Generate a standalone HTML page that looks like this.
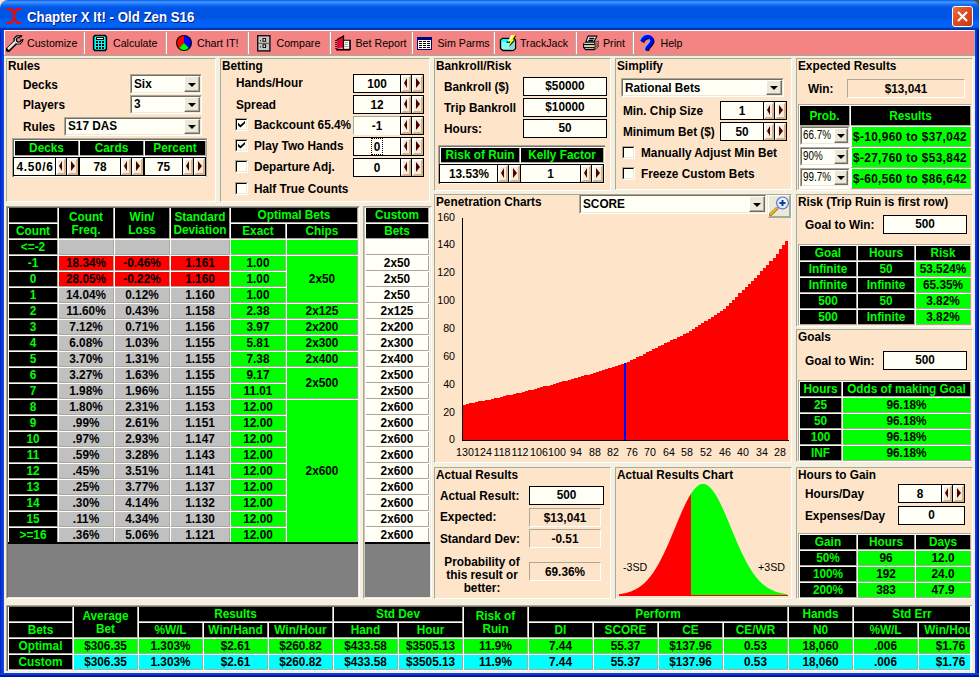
<!DOCTYPE html>
<html><head><meta charset="utf-8"><title>Chapter X It! - Old Zen S16</title>
<style>
html,body{margin:0;padding:0;}
html{width:979px;height:677px;overflow:hidden;}
body{width:979px;height:677px;overflow:hidden;position:relative;background:#0831D9;font-family:"Liberation Sans",sans-serif;}
div,svg{position:absolute;box-sizing:border-box;}
.t{white-space:nowrap;overflow:visible;color:#000;}
.b{font-weight:bold;font-size:12.5px;transform:scaleX(0.944);}
.l{text-align:left;transform-origin:0 50%;}
.c{text-align:center;transform-origin:50% 50%;}
.r{text-align:right;transform-origin:100% 50%;}
.r11{font-weight:normal;font-size:10.67px;}
.r10{font-weight:normal;font-size:12px;transform:scaleX(0.82);}
.tb{font-weight:normal;font-size:10.67px;}
.title{font-weight:bold;font-size:14.2px;transform:scaleX(0.935);transform-origin:0 0;color:#fff;text-shadow:1px 1px 0 #0A1883;}
</style></head><body>
<div style="left:0;top:0;width:979px;height:677px;overflow:hidden;">
<div style="left:0px;top:0px;width:979px;height:677px;background:#0831D9;"></div>
<div style="left:0px;top:0px;width:10px;height:10px;background:#FEE5CA;"></div>
<div style="left:969px;top:0px;width:10px;height:10px;background:#4B4A32;"></div>
<div style="left:0px;top:0px;width:979px;height:30px;background:linear-gradient(to bottom,#0148D8 0px,#2F86FB 1px,#3C90FF 2.5px,#1E78F8 4px,#0862EE 6px,#0055E5 8px,#0053E1 18px,#005DF2 20px,#0064F8 26px,#0058E6 27.5px,#0036B8 28.5px,#002C9E 30px);border-radius:8px 8px 0 0;"></div>
<div style="left:0px;top:30px;width:4px;height:647px;background:linear-gradient(to right,#001EB4 0,#0830D6 1px,#0A3CDC 2.5px,#1450E6 4px);"></div>
<div style="left:975px;top:30px;width:4px;height:647px;background:linear-gradient(to right,#0A46E6 0,#0838D8 1.5px,#001EA4 2.5px,#00138C 4px);"></div>
<div style="left:0px;top:673px;width:979px;height:4px;background:linear-gradient(to bottom,#0A46E6 0,#0838D8 1.5px,#001EA4 2.5px,#00138C 4px);"></div>
<svg style="left:6px;top:8px" width="16" height="16" viewBox="0 0 16 16"><path d="M0.5 0.8 H3 C6 0.8 7 3.5 8 6.5 C9 3.5 10 0.8 13 0.8 H15.5 M0.5 15.2 H3 C6 15.2 7 12.5 8 9.5 C9 12.5 10 15.2 13 15.2 H15.5 M8 5 V11" fill="none" stroke="#FF0000" stroke-width="2.3"/></svg>
<div class="t title l" style="left:26.5px;top:8px;width:300px;height:18px;line-height:18px;">Chapter X It! - Old Zen S16</div>
<div style="left:952px;top:6px;width:21px;height:21px;border:1px solid #fff;border-radius:3px;background:linear-gradient(135deg,#E9733F 0%,#DD4B20 45%,#C83A12 100%);"></div>
<svg style="left:952px;top:6px" width="21" height="21" viewBox="0 0 21 21"><path d="M6 6 L15 15 M15 6 L6 15" stroke="#fff" stroke-width="2.2" stroke-linecap="butt"/></svg>
<div style="left:4px;top:30px;width:971px;height:643px;background:#F6EFDD;"></div>
<div style="left:4px;top:30px;width:971px;height:25px;background:#F48383;border-top:1px solid #fff;border-left:1px solid #fff;border-right:1px solid #A0AC9C;"></div>
<div style="left:4px;top:55px;width:971px;height:1px;background:#A0AC9C;"></div>
<div style="left:83px;top:32px;width:1px;height:22px;background:#A9B5A4;"></div>
<div style="left:84px;top:32px;width:1px;height:22px;background:#FFFFFF;"></div>
<div style="left:165px;top:32px;width:1px;height:22px;background:#A9B5A4;"></div>
<div style="left:166px;top:32px;width:1px;height:22px;background:#FFFFFF;"></div>
<div style="left:247px;top:32px;width:1px;height:22px;background:#A9B5A4;"></div>
<div style="left:248px;top:32px;width:1px;height:22px;background:#FFFFFF;"></div>
<div style="left:329px;top:32px;width:1px;height:22px;background:#A9B5A4;"></div>
<div style="left:330px;top:32px;width:1px;height:22px;background:#FFFFFF;"></div>
<div style="left:411px;top:32px;width:1px;height:22px;background:#A9B5A4;"></div>
<div style="left:412px;top:32px;width:1px;height:22px;background:#FFFFFF;"></div>
<div style="left:493px;top:32px;width:1px;height:22px;background:#A9B5A4;"></div>
<div style="left:494px;top:32px;width:1px;height:22px;background:#FFFFFF;"></div>
<div style="left:575px;top:32px;width:1px;height:22px;background:#A9B5A4;"></div>
<div style="left:576px;top:32px;width:1px;height:22px;background:#FFFFFF;"></div>
<div style="left:632px;top:32px;width:1px;height:22px;background:#A9B5A4;"></div>
<div style="left:633px;top:32px;width:1px;height:22px;background:#FFFFFF;"></div>
<svg style="left:6px;top:34px" width="18" height="18" viewBox="0 0 18 18"><path d="M2.2 15.6 L9 8.8" stroke="#000" stroke-width="4.8" stroke-linecap="square"/><path d="M7.6 4.2 L10.4 1.2 H14.6 L17 3.4 V7.6 L14.4 10.6 H10 L7.6 8.6 Z" fill="#000"/><path d="M8.8 4.7 L10.9 2.4 H14.1 L15.8 3.9 V7.1 L13.9 9.4 H10.5 L8.8 8.1 Z" fill="#F8F8F8"/><path d="M2 15.2 L9.2 8.2" stroke="#F4F4F4" stroke-width="2.4" stroke-linecap="butt"/><path d="M2.6 15.8 L9.6 9" stroke="#9A9A9A" stroke-width="1" stroke-dasharray="1 1"/><circle cx="12.6" cy="5.8" r="2.9" fill="#000"/><circle cx="12.7" cy="5.7" r="1.7" fill="#F48383"/><path d="M12.8 5.6 L17.6 1.6 L18 5 Z" fill="#F48383"/><path d="M13.4 3.2 L16.2 1.4 M15.2 6.4 L17.6 5.6" stroke="#000" stroke-width="1.1"/></svg>
<div class="t tb l" style="left:27px;top:36px;width:100px;height:14px;line-height:14px;">Customize</div>
<svg style="left:92px;top:34px" width="16" height="18" viewBox="0 0 16 18"><path d="M2.8 1.6 H13.2 L14.4 2.8 V15.2 L13.2 16.4 H2.8 L1.6 15.2 V2.8 Z" fill="#00FFFF" stroke="#000" stroke-width="1.5"/><g shape-rendering="crispEdges"><rect x="4" y="3" width="8" height="3" fill="#000"/><rect x="5" y="4" width="6" height="1" fill="#fff"/><g fill="#000"><rect x="4" y="7" width="2" height="2"/><rect x="7" y="7" width="2" height="2"/><rect x="10" y="7" width="2" height="2"/><rect x="4" y="10" width="2" height="2"/><rect x="7" y="10" width="2" height="2"/><rect x="10" y="10" width="2" height="2"/><rect x="4" y="13" width="2" height="2"/><rect x="7" y="13" width="2" height="2"/><rect x="10" y="13" width="2" height="2"/></g></g></svg>
<div class="t tb l" style="left:113px;top:36px;width:100px;height:14px;line-height:14px;">Calculate</div>
<svg style="left:175px;top:34px" width="18" height="18" viewBox="0 0 18 18"><circle cx="9" cy="9" r="8" fill="#000"/><path d="M9 9 L9 2.1 A6.9 6.9 0 0 0 4.12 13.88 Z" fill="#FF0000"/><path d="M9 9 L13.88 13.88 A6.9 6.9 0 0 0 9 2.1 Z" fill="#0000FF"/><path d="M9 9 L4.12 13.88 A6.9 6.9 0 0 0 13.88 13.88 Z" fill="#00FF00"/></svg>
<div class="t tb l" style="left:197px;top:36px;width:100px;height:14px;line-height:14px;">Chart IT!</div>
<svg style="left:257px;top:35px" width="14" height="17" viewBox="0 0 14 17"><rect x="0.7" y="0.7" width="12.2" height="15.2" fill="#C6C6C6" stroke="#101010" stroke-width="1.4"/><path d="M1 8.3 H13" stroke="#505050" stroke-width="1"/><rect x="6" y="3.6" width="2.6" height="2.6" fill="#fff" stroke="#000" stroke-width="1"/><rect x="6" y="9.8" width="2.6" height="2.6" fill="#fff" stroke="#000" stroke-width="1"/><rect x="3" y="5.2" width="1" height="1" fill="#000"/><rect x="3" y="11.4" width="1" height="1" fill="#000"/></svg>
<div class="t tb l" style="left:276.5px;top:36px;width:100px;height:14px;line-height:14px;">Compare</div>
<svg style="left:334px;top:34px" width="18" height="18" viewBox="0 0 18 18"><path d="M9.1 5.8 H16.8 V15.9 H2.3 V15 H9.1Z" fill="#000"/><rect x="10.1" y="6.8" width="5.1" height="8" fill="#fff"/><path d="M11 8.6 H14 M10.6 10.5 H13.4 M10.4 12.6 H14.4" stroke="#8A8A8A" stroke-width="0.9"/><path d="M3.1 5.8 L9.1 2.7 V12.1 L3.1 15.2 Z" fill="#E4003C"/><path d="M5 4.9 L9.1 2.7 V9 Z" fill="#FF0000"/><path d="M2.8 5.7 L9.5 2.1 V6" stroke="#000" stroke-width="1.2" fill="none"/><path d="M9.4 6 V12.4 L7.5 13.6" stroke="#000" stroke-width="0.9" fill="none"/><path d="M1.1 6.5 H3 M1.1 8.4 H3 M1.1 10.3 H3 M1.1 12.4 H3 M1.1 14.4 H3" stroke="#000" stroke-width="0.9"/><rect x="2.1" y="16.1" width="14" height="0.8" fill="#900000"/></svg>
<div class="t tb l" style="left:355.5px;top:36px;width:100px;height:14px;line-height:14px;">Bet Report</div>
<svg style="left:417px;top:37px" width="15" height="13" viewBox="0 0 15 13" shape-rendering="crispEdges"><rect x="0" y="0" width="15" height="13" fill="#000080"/><rect x="1" y="3" width="13" height="9" fill="#FFFFF8"/><g fill="#000"><rect x="2" y="4" width="3" height="1"/><rect x="6" y="4" width="3" height="1"/><rect x="10" y="4" width="3" height="1"/><rect x="2" y="6" width="3" height="1"/><rect x="6" y="6" width="3" height="1"/><rect x="10" y="6" width="3" height="1"/><rect x="2" y="8" width="3" height="1"/><rect x="6" y="8" width="3" height="1"/><rect x="10" y="8" width="3" height="1"/><rect x="2" y="10" width="3" height="1"/><rect x="6" y="10" width="3" height="1"/><rect x="10" y="10" width="3" height="1"/></g></svg>
<div class="t tb l" style="left:437.5px;top:36px;width:100px;height:14px;line-height:14px;">Sim Parms</div>
<svg style="left:499px;top:34px" width="18" height="18" viewBox="0 0 18 18"><path d="M1.5 6 L3.5 4.5 H14.5 L16.5 6 V14.5 L14 16.5 H4 L1.5 14.5 Z" fill="#86FFFF" stroke="#000" stroke-width="1.4" stroke-linejoin="miter"/><path d="M10.5 8 L16 7 V14.2 L13.8 16 H10.5 Z" fill="#8FD6D6"/><rect x="2.6" y="5.3" width="8" height="2.5" fill="#00FFFF"/><path d="M7.5 8.2 H12" stroke="#000" stroke-width="1.3"/><path d="M13.3 1.6 L17.4 1.5 L14.4 6.2 L16.2 6.2 L10 13 L12.2 7.8 L9.8 7.8 Z" fill="#000"/><path d="M12.5 1 L16.6 0.9 L13.6 5.6 L15.4 5.6 L9.2 12.4 L11.4 7.2 L9 7.2 Z" fill="#FFFF00"/><path d="M12.5 1 L14.4 0.95 L10.8 7.2 L9 7.2 Z" fill="#fff"/></svg>
<div class="t tb l" style="left:520px;top:36px;width:100px;height:14px;line-height:14px;">TrackJack</div>
<svg style="left:582px;top:35px" width="18" height="16" viewBox="0 0 18 16"><path d="M12.6 6.8 L16.8 5.6 V11.5 L13.4 15 H12.6 Z" fill="#6A3A3A"/><path d="M1.1 8.4 L3.6 6.8 H12.6 V15.2 H3.4 L1.1 12.8 Z" fill="#000"/><path d="M6 1.1 H15 L12.1 6.8 H4 Z" fill="#fff" stroke="#000" stroke-width="1.1" stroke-linejoin="round"/><path d="M7.2 3.5 H12.4 M6.3 5.4 H11.4" stroke="#000" stroke-width="1.3"/><rect x="2.2" y="7.7" width="9.8" height="1.2" fill="#E0E0E0"/><rect x="2.1" y="10.1" width="10.4" height="2" fill="#D4D4D4"/><rect x="7.8" y="10.6" width="3.3" height="1" fill="#F0F000"/><rect x="3.2" y="13.1" width="8.6" height="0.9" fill="#C8C8C8"/><path d="M13.4 8.2 L15.8 7.4 M13.6 10.4 L15.6 9.2 M13.6 13 L15.4 11.4" stroke="#E8C8C8" stroke-width="0.8"/></svg>
<div class="t tb l" style="left:603px;top:36px;width:100px;height:14px;line-height:14px;">Print</div>
<svg style="left:639px;top:34px" width="17" height="18" viewBox="0 0 17 18"><g fill="none" stroke-linecap="butt" stroke-linejoin="round"><path d="M3.6 8.2 C5.3 4.3 7.8 3.2 10.2 3.6 C14.3 4.3 14.8 8.3 12.3 10.8 C10.3 12.8 8.6 14.2 8.4 16.8" stroke="#000" stroke-width="3.4"/><path d="M2.2 6.8 C3.9 2.9 6.4 1.8 8.8 2.2 C12.9 2.9 13.4 6.9 10.9 9.4 C8.9 11.4 7.2 12.8 7 15.4" stroke="#00F0FF" stroke-width="3.4"/><path d="M2.8 7.4 C4.5 3.5 7 2.4 9.4 2.8 C13.5 3.5 14 7.5 11.5 10 C9.5 12 7.8 13.4 7.6 16" stroke="#0000FF" stroke-width="3.4"/></g></svg>
<div class="t tb l" style="left:660.5px;top:36px;width:100px;height:14px;line-height:14px;">Help</div>
<div style="left:6px;top:58px;width:210px;height:144px;background:#FEE5CA;border-top:1px solid #A0AC9C;border-left:1px solid #A0AC9C;border-bottom:1px solid #fff;border-right:1px solid #fff;"></div>
<div class="t b l" style="left:8px;top:59px;width:200px;height:14px;line-height:14px;">Rules</div>
<div class="t b l" style="left:23px;top:78px;width:200px;height:14px;line-height:14px;">Decks</div>
<div class="t b l" style="left:23px;top:98px;width:200px;height:14px;line-height:14px;">Players</div>
<div class="t b l" style="left:23px;top:120px;width:200px;height:14px;line-height:14px;">Rules</div>
<div style="left:130px;top:74px;width:72px;height:20px;background:#FFFFF5;border-top:1px solid #ACA899;border-left:1px solid #ACA899;border-bottom:1px solid #fff;border-right:1px solid #fff;"></div>
<div style="left:131px;top:75px;width:70px;height:18px;border-top:1px solid #716F64;border-left:1px solid #716F64;border-bottom:1px solid #ECE9D8;border-right:1px solid #ECE9D8;"></div>
<div style="left:184px;top:76px;width:16px;height:16px;background:#ECE9D8;border-top:1px solid #fff;border-left:1px solid #fff;border-bottom:1px solid #716F64;border-right:1px solid #716F64;box-shadow:inset -1px -1px 0 #ACA899;"></div>
<div style="left:188px;top:83px;width:0;height:0;border-left:4px solid transparent;border-right:4px solid transparent;border-top:4px solid #000;"></div>
<div class="t b l" style="left:134px;top:77px;width:50px;height:14px;line-height:14px;">Six</div>
<div style="left:130px;top:95px;width:72px;height:19px;background:#FFFFF5;border-top:1px solid #ACA899;border-left:1px solid #ACA899;border-bottom:1px solid #fff;border-right:1px solid #fff;"></div>
<div style="left:131px;top:96px;width:70px;height:17px;border-top:1px solid #716F64;border-left:1px solid #716F64;border-bottom:1px solid #ECE9D8;border-right:1px solid #ECE9D8;"></div>
<div style="left:184px;top:97px;width:16px;height:15px;background:#ECE9D8;border-top:1px solid #fff;border-left:1px solid #fff;border-bottom:1px solid #716F64;border-right:1px solid #716F64;box-shadow:inset -1px -1px 0 #ACA899;"></div>
<div style="left:188px;top:103px;width:0;height:0;border-left:4px solid transparent;border-right:4px solid transparent;border-top:4px solid #000;"></div>
<div class="t b l" style="left:134px;top:97px;width:50px;height:14px;line-height:14px;">3</div>
<div style="left:64px;top:117px;width:138px;height:19px;background:#FFFFF5;border-top:1px solid #ACA899;border-left:1px solid #ACA899;border-bottom:1px solid #fff;border-right:1px solid #fff;"></div>
<div style="left:65px;top:118px;width:136px;height:17px;border-top:1px solid #716F64;border-left:1px solid #716F64;border-bottom:1px solid #ECE9D8;border-right:1px solid #ECE9D8;"></div>
<div style="left:184px;top:119px;width:16px;height:15px;background:#ECE9D8;border-top:1px solid #fff;border-left:1px solid #fff;border-bottom:1px solid #716F64;border-right:1px solid #716F64;box-shadow:inset -1px -1px 0 #ACA899;"></div>
<div style="left:188px;top:125px;width:0;height:0;border-left:4px solid transparent;border-right:4px solid transparent;border-top:4px solid #000;"></div>
<div class="t b l" style="left:68px;top:119px;width:116px;height:14px;line-height:14px;">S17 DAS</div>
<div style="left:12px;top:138px;width:195px;height:39px;background:#fff;border-right:1px solid #ACA899;border-top:1px solid #ACA899;border-left:1px solid #ACA899;"></div>
<div style="left:13px;top:139px;width:193px;height:38px;background:#fff;border-top:1px solid #716F64;border-left:1px solid #716F64;"></div>
<div style="left:15px;top:141px;width:64px;height:15px;background:#000;border-right:1px solid #ACA899;border-bottom:1px solid #ACA899;"></div>
<div class="t b c" style="left:15px;top:141px;width:63px;height:14px;line-height:14px;color:#00FF00;">Decks</div>
<div style="left:13px;top:157px;width:66px;height:19px;background:#FFFFF5;border:1px solid #000;"></div>
<div style="left:66px;top:158px;width:1px;height:17px;background:#000;"></div>
<div style="left:55px;top:158px;width:1px;height:17px;background:#000;"></div>
<div style="left:56px;top:158px;width:10px;height:17px;background:#F6ECDA;border-top:2px solid #fff;border-left:2px solid #fff;border-bottom:2px solid #D3B48F;border-right:2px solid #D3B48F;"></div>
<div style="left:59px;top:161px;width:0;height:0;border-top:5.5px solid transparent;border-bottom:5.5px solid transparent;border-right:3px solid #4A0000;"></div>
<div style="left:67px;top:158px;width:11px;height:17px;background:#F6ECDA;border-top:2px solid #fff;border-left:2px solid #fff;border-bottom:2px solid #D3B48F;border-right:2px solid #D3B48F;"></div>
<div style="left:71px;top:161px;width:0;height:0;border-top:5.5px solid transparent;border-bottom:5.5px solid transparent;border-left:4px solid #4A0000;"></div>
<div class="t b c" style="left:15px;top:160px;width:40px;height:14px;line-height:14px;letter-spacing:0.7px;">4.50/6</div>
<div style="left:80px;top:141px;width:64px;height:15px;background:#000;border-right:1px solid #ACA899;border-bottom:1px solid #ACA899;"></div>
<div class="t b c" style="left:80px;top:141px;width:63px;height:14px;line-height:14px;color:#00FF00;">Cards</div>
<div style="left:79px;top:157px;width:65px;height:19px;background:#FFFFF5;border:1px solid #000;"></div>
<div style="left:131px;top:158px;width:1px;height:17px;background:#000;"></div>
<div style="left:120px;top:158px;width:1px;height:17px;background:#000;"></div>
<div style="left:121px;top:158px;width:10px;height:17px;background:#F6ECDA;border-top:2px solid #fff;border-left:2px solid #fff;border-bottom:2px solid #D3B48F;border-right:2px solid #D3B48F;"></div>
<div style="left:124px;top:161px;width:0;height:0;border-top:5.5px solid transparent;border-bottom:5.5px solid transparent;border-right:3px solid #4A0000;"></div>
<div style="left:132px;top:158px;width:11px;height:17px;background:#F6ECDA;border-top:2px solid #fff;border-left:2px solid #fff;border-bottom:2px solid #D3B48F;border-right:2px solid #D3B48F;"></div>
<div style="left:136px;top:161px;width:0;height:0;border-top:5.5px solid transparent;border-bottom:5.5px solid transparent;border-left:4px solid #4A0000;"></div>
<div class="t b c" style="left:80px;top:160px;width:40px;height:14px;line-height:14px;letter-spacing:0;">78</div>
<div style="left:145px;top:141px;width:61px;height:15px;background:#000;border-right:1px solid #ACA899;border-bottom:1px solid #ACA899;"></div>
<div class="t b c" style="left:145px;top:141px;width:60px;height:14px;line-height:14px;color:#00FF00;">Percent</div>
<div style="left:144px;top:157px;width:62px;height:19px;background:#FFFFF5;border:1px solid #000;"></div>
<div style="left:193px;top:158px;width:1px;height:17px;background:#000;"></div>
<div style="left:182px;top:158px;width:1px;height:17px;background:#000;"></div>
<div style="left:183px;top:158px;width:10px;height:17px;background:#F6ECDA;border-top:2px solid #fff;border-left:2px solid #fff;border-bottom:2px solid #D3B48F;border-right:2px solid #D3B48F;"></div>
<div style="left:186px;top:161px;width:0;height:0;border-top:5.5px solid transparent;border-bottom:5.5px solid transparent;border-right:3px solid #4A0000;"></div>
<div style="left:194px;top:158px;width:11px;height:17px;background:#F6ECDA;border-top:2px solid #fff;border-left:2px solid #fff;border-bottom:2px solid #D3B48F;border-right:2px solid #D3B48F;"></div>
<div style="left:198px;top:161px;width:0;height:0;border-top:5.5px solid transparent;border-bottom:5.5px solid transparent;border-left:4px solid #4A0000;"></div>
<div class="t b c" style="left:145px;top:160px;width:37px;height:14px;line-height:14px;letter-spacing:0;">75</div>
<div style="left:220px;top:58px;width:210px;height:144px;background:#FEE5CA;border-top:1px solid #A0AC9C;border-left:1px solid #A0AC9C;border-bottom:1px solid #fff;border-right:1px solid #fff;"></div>
<div class="t b l" style="left:222px;top:59px;width:200px;height:14px;line-height:14px;">Betting</div>
<div class="t b l" style="left:236px;top:76px;width:200px;height:14px;line-height:14px;">Hands/Hour</div>
<div class="t b l" style="left:236px;top:98px;width:200px;height:14px;line-height:14px;">Spread</div>
<div style="left:353px;top:74px;width:71px;height:19px;background:#FFFFF5;border:1px solid #000;"></div>
<div style="left:411px;top:75px;width:1px;height:17px;background:#000;"></div>
<div style="left:400px;top:75px;width:1px;height:17px;background:#000;"></div>
<div style="left:401px;top:75px;width:10px;height:17px;background:#F6ECDA;border-top:2px solid #fff;border-left:2px solid #fff;border-bottom:2px solid #D3B48F;border-right:2px solid #D3B48F;"></div>
<div style="left:404px;top:78px;width:0;height:0;border-top:5.5px solid transparent;border-bottom:5.5px solid transparent;border-right:3px solid #4A0000;"></div>
<div style="left:412px;top:75px;width:11px;height:17px;background:#F6ECDA;border-top:2px solid #fff;border-left:2px solid #fff;border-bottom:2px solid #D3B48F;border-right:2px solid #D3B48F;"></div>
<div style="left:416px;top:78px;width:0;height:0;border-top:5.5px solid transparent;border-bottom:5.5px solid transparent;border-left:4px solid #4A0000;"></div>
<div class="t b c" style="left:354px;top:77px;width:46px;height:14px;line-height:14px;">100</div>
<div style="left:353px;top:95px;width:71px;height:19px;background:#FFFFF5;border:1px solid #000;"></div>
<div style="left:411px;top:96px;width:1px;height:17px;background:#000;"></div>
<div style="left:400px;top:96px;width:1px;height:17px;background:#000;"></div>
<div style="left:401px;top:96px;width:10px;height:17px;background:#F6ECDA;border-top:2px solid #fff;border-left:2px solid #fff;border-bottom:2px solid #D3B48F;border-right:2px solid #D3B48F;"></div>
<div style="left:404px;top:99px;width:0;height:0;border-top:5.5px solid transparent;border-bottom:5.5px solid transparent;border-right:3px solid #4A0000;"></div>
<div style="left:412px;top:96px;width:11px;height:17px;background:#F6ECDA;border-top:2px solid #fff;border-left:2px solid #fff;border-bottom:2px solid #D3B48F;border-right:2px solid #D3B48F;"></div>
<div style="left:416px;top:99px;width:0;height:0;border-top:5.5px solid transparent;border-bottom:5.5px solid transparent;border-left:4px solid #4A0000;"></div>
<div class="t b c" style="left:354px;top:98px;width:46px;height:14px;line-height:14px;">12</div>
<div style="left:353px;top:116px;width:47px;height:19px;background:#FFFFF5;border-top:1px solid #A0AC9C;border-left:1px solid #A0AC9C;border-bottom:1px solid #fff;"></div>
<div style="left:400px;top:116px;width:24px;height:19px;border:1px solid #000;"></div>
<div style="left:411px;top:117px;width:1px;height:17px;background:#000;"></div>
<div style="left:400px;top:117px;width:1px;height:17px;background:#000;"></div>
<div style="left:401px;top:117px;width:10px;height:17px;background:#F6ECDA;border-top:2px solid #fff;border-left:2px solid #fff;border-bottom:2px solid #D3B48F;border-right:2px solid #D3B48F;"></div>
<div style="left:404px;top:120px;width:0;height:0;border-top:5.5px solid transparent;border-bottom:5.5px solid transparent;border-right:3px solid #4A0000;"></div>
<div style="left:412px;top:117px;width:11px;height:17px;background:#F6ECDA;border-top:2px solid #fff;border-left:2px solid #fff;border-bottom:2px solid #D3B48F;border-right:2px solid #D3B48F;"></div>
<div style="left:416px;top:120px;width:0;height:0;border-top:5.5px solid transparent;border-bottom:5.5px solid transparent;border-left:4px solid #4A0000;"></div>
<div class="t b c" style="left:354px;top:119px;width:46px;height:14px;line-height:14px;">-1</div>
<div style="left:353px;top:137px;width:71px;height:19px;background:#FFFFF5;border:1px solid #000;"></div>
<div style="left:411px;top:138px;width:1px;height:17px;background:#000;"></div>
<div style="left:400px;top:138px;width:1px;height:17px;background:#000;"></div>
<div style="left:401px;top:138px;width:10px;height:17px;background:#F6ECDA;border-top:2px solid #fff;border-left:2px solid #fff;border-bottom:2px solid #D3B48F;border-right:2px solid #D3B48F;"></div>
<div style="left:404px;top:141px;width:0;height:0;border-top:5.5px solid transparent;border-bottom:5.5px solid transparent;border-right:3px solid #4A0000;"></div>
<div style="left:412px;top:138px;width:11px;height:17px;background:#F6ECDA;border-top:2px solid #fff;border-left:2px solid #fff;border-bottom:2px solid #D3B48F;border-right:2px solid #D3B48F;"></div>
<div style="left:416px;top:141px;width:0;height:0;border-top:5.5px solid transparent;border-bottom:5.5px solid transparent;border-left:4px solid #4A0000;"></div>
<div class="t b c" style="left:354px;top:140px;width:46px;height:14px;line-height:14px;">0</div>
<div style="left:353px;top:158px;width:71px;height:19px;background:#FFFFF5;border:1px solid #000;"></div>
<div style="left:411px;top:159px;width:1px;height:17px;background:#000;"></div>
<div style="left:400px;top:159px;width:1px;height:17px;background:#000;"></div>
<div style="left:401px;top:159px;width:10px;height:17px;background:#F6ECDA;border-top:2px solid #fff;border-left:2px solid #fff;border-bottom:2px solid #D3B48F;border-right:2px solid #D3B48F;"></div>
<div style="left:404px;top:162px;width:0;height:0;border-top:5.5px solid transparent;border-bottom:5.5px solid transparent;border-right:3px solid #4A0000;"></div>
<div style="left:412px;top:159px;width:11px;height:17px;background:#F6ECDA;border-top:2px solid #fff;border-left:2px solid #fff;border-bottom:2px solid #D3B48F;border-right:2px solid #D3B48F;"></div>
<div style="left:416px;top:162px;width:0;height:0;border-top:5.5px solid transparent;border-bottom:5.5px solid transparent;border-left:4px solid #4A0000;"></div>
<div class="t b c" style="left:354px;top:161px;width:46px;height:14px;line-height:14px;">0</div>
<div style="left:371px;top:138px;width:12px;height:17px;border:1px dotted #000;"></div>
<div style="left:235px;top:118px;width:13px;height:13px;background:#FFFFF5;border-top:1px solid #ACA899;border-left:1px solid #ACA899;border-bottom:1px solid #fff;border-right:1px solid #fff;"></div>
<div style="left:236px;top:119px;width:11px;height:11px;border-top:1px solid #000;border-left:1px solid #000;border-bottom:1px solid #ECE9D8;border-right:1px solid #ECE9D8;"></div>
<svg style="left:238px;top:121px" width="7" height="7" viewBox="0 0 7 7"><path d="M0 2v3l2.5 2.5L7 2.5V0L2.5 4.5z" fill="#000" transform="scale(1,0.875)"/></svg>
<div class="t b l" style="left:254px;top:118px;width:200px;height:14px;line-height:14px;">Backcount 65.4%</div>
<div style="left:235px;top:139px;width:13px;height:13px;background:#FFFFF5;border-top:1px solid #ACA899;border-left:1px solid #ACA899;border-bottom:1px solid #fff;border-right:1px solid #fff;"></div>
<div style="left:236px;top:140px;width:11px;height:11px;border-top:1px solid #000;border-left:1px solid #000;border-bottom:1px solid #ECE9D8;border-right:1px solid #ECE9D8;"></div>
<svg style="left:238px;top:142px" width="7" height="7" viewBox="0 0 7 7"><path d="M0 2v3l2.5 2.5L7 2.5V0L2.5 4.5z" fill="#000" transform="scale(1,0.875)"/></svg>
<div class="t b l" style="left:254px;top:139px;width:200px;height:14px;line-height:14px;">Play Two Hands</div>
<div style="left:235px;top:160px;width:13px;height:13px;background:#FFFFF5;border-top:1px solid #ACA899;border-left:1px solid #ACA899;border-bottom:1px solid #fff;border-right:1px solid #fff;"></div>
<div style="left:236px;top:161px;width:11px;height:11px;border-top:1px solid #000;border-left:1px solid #000;border-bottom:1px solid #ECE9D8;border-right:1px solid #ECE9D8;"></div>
<div class="t b l" style="left:254px;top:160px;width:200px;height:14px;line-height:14px;">Departure Adj.</div>
<div style="left:235px;top:182px;width:13px;height:13px;background:#FFFFF5;border-top:1px solid #ACA899;border-left:1px solid #ACA899;border-bottom:1px solid #fff;border-right:1px solid #fff;"></div>
<div style="left:236px;top:183px;width:11px;height:11px;border-top:1px solid #000;border-left:1px solid #000;border-bottom:1px solid #ECE9D8;border-right:1px solid #ECE9D8;"></div>
<div class="t b l" style="left:254px;top:182px;width:200px;height:14px;line-height:14px;">Half True Counts</div>
<div style="left:434px;top:58px;width:177px;height:133px;background:#FEE5CA;border-top:1px solid #A0AC9C;border-left:1px solid #A0AC9C;border-bottom:1px solid #fff;border-right:1px solid #fff;"></div>
<div class="t b l" style="left:436px;top:59px;width:200px;height:14px;line-height:14px;">Bankroll/Risk</div>
<div class="t b l" style="left:444px;top:80px;width:200px;height:14px;line-height:14px;">Bankroll ($)</div>
<div class="t b l" style="left:444px;top:101px;width:200px;height:14px;line-height:14px;">Trip Bankroll</div>
<div class="t b l" style="left:444px;top:122px;width:200px;height:14px;line-height:14px;">Hours:</div>
<div style="left:523px;top:77px;width:84px;height:19px;background:#FFFFF5;border:1px solid #000;"></div>
<div class="t b c" style="left:524px;top:79px;width:82px;height:14px;line-height:14px;">$50000</div>
<div style="left:523px;top:98px;width:84px;height:19px;background:#FFFFF5;border:1px solid #000;"></div>
<div class="t b c" style="left:524px;top:100px;width:82px;height:14px;line-height:14px;">$10000</div>
<div style="left:523px;top:119px;width:84px;height:19px;background:#FFFFF5;border:1px solid #000;"></div>
<div class="t b c" style="left:524px;top:121px;width:82px;height:14px;line-height:14px;">50</div>
<div style="left:438px;top:145px;width:167px;height:39px;background:#fff;border-top:1px solid #ACA899;border-left:1px solid #ACA899;"></div>
<div style="left:439px;top:146px;width:166px;height:38px;background:#fff;border-top:1px solid #716F64;border-left:1px solid #716F64;"></div>
<div style="left:441px;top:148px;width:79px;height:15px;background:#000;border-right:1px solid #ACA899;border-bottom:1px solid #ACA899;"></div>
<div class="t b c" style="left:441px;top:148px;width:78px;height:14px;line-height:14px;color:#00FF00;">Risk of Ruin</div>
<div style="left:439px;top:164px;width:82px;height:19px;background:#FFFFF5;border:1px solid #000;"></div>
<div style="left:508px;top:165px;width:1px;height:17px;background:#000;"></div>
<div style="left:497px;top:165px;width:1px;height:17px;background:#000;"></div>
<div style="left:498px;top:165px;width:10px;height:17px;background:#F6ECDA;border-top:2px solid #fff;border-left:2px solid #fff;border-bottom:2px solid #D3B48F;border-right:2px solid #D3B48F;"></div>
<div style="left:501px;top:168px;width:0;height:0;border-top:5.5px solid transparent;border-bottom:5.5px solid transparent;border-right:3px solid #4A0000;"></div>
<div style="left:509px;top:165px;width:11px;height:17px;background:#F6ECDA;border-top:2px solid #fff;border-left:2px solid #fff;border-bottom:2px solid #D3B48F;border-right:2px solid #D3B48F;"></div>
<div style="left:513px;top:168px;width:0;height:0;border-top:5.5px solid transparent;border-bottom:5.5px solid transparent;border-left:4px solid #4A0000;"></div>
<div class="t b c" style="left:441px;top:167px;width:56px;height:14px;line-height:14px;">13.53%</div>
<div style="left:521px;top:148px;width:83px;height:15px;background:#000;border-right:1px solid #ACA899;border-bottom:1px solid #ACA899;"></div>
<div class="t b c" style="left:521px;top:148px;width:82px;height:14px;line-height:14px;color:#00FF00;">Kelly Factor</div>
<div style="left:520px;top:164px;width:84px;height:19px;background:#FFFFF5;border:1px solid #000;"></div>
<div style="left:591px;top:165px;width:1px;height:17px;background:#000;"></div>
<div style="left:580px;top:165px;width:1px;height:17px;background:#000;"></div>
<div style="left:581px;top:165px;width:10px;height:17px;background:#F6ECDA;border-top:2px solid #fff;border-left:2px solid #fff;border-bottom:2px solid #D3B48F;border-right:2px solid #D3B48F;"></div>
<div style="left:584px;top:168px;width:0;height:0;border-top:5.5px solid transparent;border-bottom:5.5px solid transparent;border-right:3px solid #4A0000;"></div>
<div style="left:592px;top:165px;width:11px;height:17px;background:#F6ECDA;border-top:2px solid #fff;border-left:2px solid #fff;border-bottom:2px solid #D3B48F;border-right:2px solid #D3B48F;"></div>
<div style="left:596px;top:168px;width:0;height:0;border-top:5.5px solid transparent;border-bottom:5.5px solid transparent;border-left:4px solid #4A0000;"></div>
<div class="t b c" style="left:521px;top:167px;width:59px;height:14px;line-height:14px;">1</div>
<div style="left:615px;top:58px;width:177px;height:132px;background:#FEE5CA;border-top:1px solid #A0AC9C;border-left:1px solid #A0AC9C;border-bottom:1px solid #fff;border-right:1px solid #fff;"></div>
<div class="t b l" style="left:617px;top:59px;width:200px;height:14px;line-height:14px;">Simplify</div>
<div style="left:621px;top:78px;width:163px;height:19px;background:#FFFFF5;border-top:1px solid #ACA899;border-left:1px solid #ACA899;border-bottom:1px solid #fff;border-right:1px solid #fff;"></div>
<div style="left:622px;top:79px;width:161px;height:17px;border-top:1px solid #716F64;border-left:1px solid #716F64;border-bottom:1px solid #ECE9D8;border-right:1px solid #ECE9D8;"></div>
<div style="left:766px;top:80px;width:16px;height:15px;background:#ECE9D8;border-top:1px solid #fff;border-left:1px solid #fff;border-bottom:1px solid #716F64;border-right:1px solid #716F64;box-shadow:inset -1px -1px 0 #ACA899;"></div>
<div style="left:770px;top:86px;width:0;height:0;border-left:4px solid transparent;border-right:4px solid transparent;border-top:4px solid #000;"></div>
<div class="t b l" style="left:625px;top:81px;width:141px;height:14px;line-height:14px;">Rational Bets</div>
<div class="t b l" style="left:623px;top:104px;width:200px;height:14px;line-height:14px;">Min. Chip Size</div>
<div class="t b l" style="left:623px;top:125px;width:200px;height:14px;line-height:14px;">Minimum Bet ($)</div>
<div style="left:720px;top:101px;width:67px;height:19px;background:#FFFFF5;border:1px solid #000;"></div>
<div style="left:774px;top:102px;width:1px;height:17px;background:#000;"></div>
<div style="left:763px;top:102px;width:1px;height:17px;background:#000;"></div>
<div style="left:764px;top:102px;width:10px;height:17px;background:#F6ECDA;border-top:2px solid #fff;border-left:2px solid #fff;border-bottom:2px solid #D3B48F;border-right:2px solid #D3B48F;"></div>
<div style="left:767px;top:105px;width:0;height:0;border-top:5.5px solid transparent;border-bottom:5.5px solid transparent;border-right:3px solid #4A0000;"></div>
<div style="left:775px;top:102px;width:11px;height:17px;background:#F6ECDA;border-top:2px solid #fff;border-left:2px solid #fff;border-bottom:2px solid #D3B48F;border-right:2px solid #D3B48F;"></div>
<div style="left:779px;top:105px;width:0;height:0;border-top:5.5px solid transparent;border-bottom:5.5px solid transparent;border-left:4px solid #4A0000;"></div>
<div class="t b c" style="left:721px;top:104px;width:42px;height:14px;line-height:14px;">1</div>
<div style="left:720px;top:122px;width:67px;height:19px;background:#FFFFF5;border:1px solid #000;"></div>
<div style="left:774px;top:123px;width:1px;height:17px;background:#000;"></div>
<div style="left:763px;top:123px;width:1px;height:17px;background:#000;"></div>
<div style="left:764px;top:123px;width:10px;height:17px;background:#F6ECDA;border-top:2px solid #fff;border-left:2px solid #fff;border-bottom:2px solid #D3B48F;border-right:2px solid #D3B48F;"></div>
<div style="left:767px;top:126px;width:0;height:0;border-top:5.5px solid transparent;border-bottom:5.5px solid transparent;border-right:3px solid #4A0000;"></div>
<div style="left:775px;top:123px;width:11px;height:17px;background:#F6ECDA;border-top:2px solid #fff;border-left:2px solid #fff;border-bottom:2px solid #D3B48F;border-right:2px solid #D3B48F;"></div>
<div style="left:779px;top:126px;width:0;height:0;border-top:5.5px solid transparent;border-bottom:5.5px solid transparent;border-left:4px solid #4A0000;"></div>
<div class="t b c" style="left:721px;top:125px;width:42px;height:14px;line-height:14px;">50</div>
<div style="left:622px;top:146px;width:13px;height:13px;background:#FFFFF5;border-top:1px solid #ACA899;border-left:1px solid #ACA899;border-bottom:1px solid #fff;border-right:1px solid #fff;"></div>
<div style="left:623px;top:147px;width:11px;height:11px;border-top:1px solid #000;border-left:1px solid #000;border-bottom:1px solid #ECE9D8;border-right:1px solid #ECE9D8;"></div>
<div class="t b l" style="left:641px;top:146px;width:200px;height:14px;line-height:14px;">Manually Adjust Min Bet</div>
<div style="left:622px;top:167px;width:13px;height:13px;background:#FFFFF5;border-top:1px solid #ACA899;border-left:1px solid #ACA899;border-bottom:1px solid #fff;border-right:1px solid #fff;"></div>
<div style="left:623px;top:168px;width:11px;height:11px;border-top:1px solid #000;border-left:1px solid #000;border-bottom:1px solid #ECE9D8;border-right:1px solid #ECE9D8;"></div>
<div class="t b l" style="left:641px;top:167px;width:200px;height:14px;line-height:14px;">Freeze Custom Bets</div>
<div style="left:796px;top:58px;width:177px;height:133px;background:#FEE5CA;border-top:1px solid #A0AC9C;border-left:1px solid #A0AC9C;border-bottom:1px solid #fff;border-right:1px solid #fff;"></div>
<div class="t b l" style="left:798px;top:59px;width:200px;height:14px;line-height:14px;">Expected Results</div>
<div class="t b l" style="left:808px;top:82px;width:200px;height:14px;line-height:14px;">Win:</div>
<div style="left:847px;top:79px;width:118px;height:19px;border-top:1px solid #ACA899;border-left:1px solid #ACA899;border-bottom:1px solid #fff;border-right:1px solid #fff;"></div>
<div class="t b c" style="left:848px;top:82px;width:116px;height:14px;line-height:14px;">$13,041</div>
<div style="left:798px;top:104px;width:173px;height:85px;background:#fff;border-top:1px solid #ACA899;border-left:1px solid #ACA899;"></div>
<div style="left:800px;top:106px;width:50px;height:20px;background:#000;border-right:1px solid #ACA899;border-bottom:1px solid #ACA899;"></div>
<div class="t b c" style="left:800px;top:109px;width:49px;height:14px;line-height:14px;color:#00FF00;">Prob.</div>
<div style="left:851px;top:106px;width:120px;height:20px;background:#000;border-right:1px solid #ACA899;border-bottom:1px solid #ACA899;"></div>
<div class="t b c" style="left:851px;top:109px;width:119px;height:14px;line-height:14px;color:#00FF00;">Results</div>
<div style="left:851px;top:127px;width:120px;height:20px;background:#fff;border-right:1px solid #ACA899;border-bottom:1px solid #ACA899;"></div>
<div style="left:852px;top:127px;width:119px;height:20px;background:#00FF00;border-right:1px solid #ACA899;border-bottom:1px solid #ACA899;"></div>
<div class="t b l" style="left:852px;top:130px;width:118px;height:14px;line-height:14px;color:#000;padding-left:1px;letter-spacing:0.4px;">$-10,960 to $37,042</div>
<div style="left:800px;top:126px;width:50px;height:19px;background:#FFFFF5;border-top:1px solid #ACA899;border-left:1px solid #ACA899;border-bottom:1px solid #fff;border-right:1px solid #fff;"></div>
<div style="left:801px;top:127px;width:48px;height:17px;border-top:1px solid #716F64;border-left:1px solid #716F64;border-bottom:1px solid #ECE9D8;border-right:1px solid #ECE9D8;"></div>
<div style="left:834px;top:128px;width:14px;height:15px;background:#ECE9D8;border-top:1px solid #fff;border-left:1px solid #fff;border-bottom:1px solid #716F64;border-right:1px solid #716F64;box-shadow:inset -1px -1px 0 #ACA899;"></div>
<div style="left:837px;top:134px;width:0;height:0;border-left:4px solid transparent;border-right:4px solid transparent;border-top:4px solid #000;"></div>
<div class="t r10 l" style="left:803px;top:128px;width:31px;height:14px;line-height:14px;">66.7%</div>
<div style="left:851px;top:148px;width:120px;height:20px;background:#fff;border-right:1px solid #ACA899;border-bottom:1px solid #ACA899;"></div>
<div style="left:852px;top:148px;width:119px;height:20px;background:#00FF00;border-right:1px solid #ACA899;border-bottom:1px solid #ACA899;"></div>
<div class="t b l" style="left:852px;top:151px;width:118px;height:14px;line-height:14px;color:#000;padding-left:1px;letter-spacing:0.4px;">$-27,760 to $53,842</div>
<div style="left:800px;top:147px;width:50px;height:19px;background:#FFFFF5;border-top:1px solid #ACA899;border-left:1px solid #ACA899;border-bottom:1px solid #fff;border-right:1px solid #fff;"></div>
<div style="left:801px;top:148px;width:48px;height:17px;border-top:1px solid #716F64;border-left:1px solid #716F64;border-bottom:1px solid #ECE9D8;border-right:1px solid #ECE9D8;"></div>
<div style="left:834px;top:149px;width:14px;height:15px;background:#ECE9D8;border-top:1px solid #fff;border-left:1px solid #fff;border-bottom:1px solid #716F64;border-right:1px solid #716F64;box-shadow:inset -1px -1px 0 #ACA899;"></div>
<div style="left:837px;top:155px;width:0;height:0;border-left:4px solid transparent;border-right:4px solid transparent;border-top:4px solid #000;"></div>
<div class="t r10 l" style="left:803px;top:149px;width:31px;height:14px;line-height:14px;">90%</div>
<div style="left:851px;top:169px;width:120px;height:20px;background:#fff;border-right:1px solid #ACA899;border-bottom:1px solid #ACA899;"></div>
<div style="left:852px;top:169px;width:119px;height:20px;background:#00FF00;border-right:1px solid #ACA899;border-bottom:1px solid #ACA899;"></div>
<div class="t b l" style="left:852px;top:172px;width:118px;height:14px;line-height:14px;color:#000;padding-left:1px;letter-spacing:0.4px;">$-60,560 to $86,642</div>
<div style="left:800px;top:168px;width:50px;height:19px;background:#FFFFF5;border-top:1px solid #ACA899;border-left:1px solid #ACA899;border-bottom:1px solid #fff;border-right:1px solid #fff;"></div>
<div style="left:801px;top:169px;width:48px;height:17px;border-top:1px solid #716F64;border-left:1px solid #716F64;border-bottom:1px solid #ECE9D8;border-right:1px solid #ECE9D8;"></div>
<div style="left:834px;top:170px;width:14px;height:15px;background:#ECE9D8;border-top:1px solid #fff;border-left:1px solid #fff;border-bottom:1px solid #716F64;border-right:1px solid #716F64;box-shadow:inset -1px -1px 0 #ACA899;"></div>
<div style="left:837px;top:176px;width:0;height:0;border-left:4px solid transparent;border-right:4px solid transparent;border-top:4px solid #000;"></div>
<div class="t r10 l" style="left:803px;top:170px;width:31px;height:14px;line-height:14px;">99.7%</div>
<div style="left:6px;top:206px;width:354px;height:393px;background:#fff;border-top:1px solid #ACA899;border-left:1px solid #ACA899;border-bottom:1px solid #fff;border-right:1px solid #fff;"></div>
<div style="left:7px;top:207px;width:352px;height:391px;border-top:1px solid #716F64;border-left:1px solid #716F64;border-bottom:1px solid #ECE9D8;border-right:1px solid #ECE9D8;background:#fff;"></div>
<div style="left:8px;top:544px;width:350px;height:53px;background:#808080;"></div>
<div style="left:9px;top:208px;width:49px;height:15px;background:#000;border-right:1px solid #ACA899;border-bottom:1px solid #ACA899;"></div>
<div style="left:9px;top:224px;width:49px;height:15px;background:#000;border-right:1px solid #ACA899;border-bottom:1px solid #ACA899;"></div>
<div class="t b c" style="left:9px;top:224px;width:48px;height:14px;line-height:14px;color:#00FF00;">Count</div>
<div style="left:59px;top:208px;width:55px;height:31px;background:#000;border-right:1px solid #ACA899;border-bottom:1px solid #ACA899;"></div>
<div class="t b c" style="left:59px;top:210px;width:54px;height:14px;line-height:14px;color:#00FF00">Count</div>
<div class="t b c" style="left:59px;top:223px;width:54px;height:14px;line-height:14px;color:#00FF00">Freq.</div>
<div style="left:115px;top:208px;width:55px;height:31px;background:#000;border-right:1px solid #ACA899;border-bottom:1px solid #ACA899;"></div>
<div class="t b c" style="left:115px;top:210px;width:54px;height:14px;line-height:14px;color:#00FF00">Win/</div>
<div class="t b c" style="left:115px;top:223px;width:54px;height:14px;line-height:14px;color:#00FF00">Loss</div>
<div style="left:171px;top:208px;width:59px;height:31px;background:#000;border-right:1px solid #ACA899;border-bottom:1px solid #ACA899;"></div>
<div class="t b c" style="left:171px;top:210px;width:58px;height:14px;line-height:14px;color:#00FF00">Standard</div>
<div class="t b c" style="left:171px;top:223px;width:58px;height:14px;line-height:14px;color:#00FF00">Deviation</div>
<div style="left:231px;top:208px;width:127px;height:15px;background:#000;border-right:1px solid #ACA899;border-bottom:1px solid #ACA899;"></div>
<div class="t b c" style="left:231px;top:208px;width:126px;height:14px;line-height:14px;color:#00FF00;">Optimal Bets</div>
<div style="left:231px;top:224px;width:55px;height:15px;background:#000;border-right:1px solid #ACA899;border-bottom:1px solid #ACA899;"></div>
<div class="t b c" style="left:231px;top:224px;width:54px;height:14px;line-height:14px;color:#00FF00;">Exact</div>
<div style="left:287px;top:224px;width:71px;height:15px;background:#000;border-right:1px solid #ACA899;border-bottom:1px solid #ACA899;"></div>
<div class="t b c" style="left:287px;top:224px;width:70px;height:14px;line-height:14px;color:#00FF00;">Chips</div>
<div style="left:9px;top:240px;width:49px;height:15px;background:#000;border-right:1px solid #ACA899;border-bottom:1px solid #ACA899;"></div>
<div class="t b c" style="left:9px;top:240px;width:48px;height:14px;line-height:14px;color:#00FF00;">&lt;=-2</div>
<div style="left:59px;top:240px;width:55px;height:15px;background:#C0C0C0;border-right:1px solid #ACA899;border-bottom:1px solid #ACA899;"></div>
<div style="left:115px;top:240px;width:55px;height:15px;background:#C0C0C0;border-right:1px solid #ACA899;border-bottom:1px solid #ACA899;"></div>
<div style="left:171px;top:240px;width:59px;height:15px;background:#C0C0C0;border-right:1px solid #ACA899;border-bottom:1px solid #ACA899;"></div>
<div style="left:231px;top:240px;width:55px;height:15px;background:#00FF00;border-right:1px solid #ACA899;border-bottom:1px solid #ACA899;"></div>
<div style="left:9px;top:256px;width:49px;height:15px;background:#000;border-right:1px solid #ACA899;border-bottom:1px solid #ACA899;"></div>
<div class="t b c" style="left:9px;top:256px;width:48px;height:14px;line-height:14px;color:#00FF00;">-1</div>
<div style="left:59px;top:256px;width:55px;height:15px;background:#FF0000;border-right:1px solid #ACA899;border-bottom:1px solid #ACA899;"></div>
<div class="t b c" style="left:59px;top:256px;width:54px;height:14px;line-height:14px;color:#000;">18.34%</div>
<div style="left:115px;top:256px;width:55px;height:15px;background:#FF0000;border-right:1px solid #ACA899;border-bottom:1px solid #ACA899;"></div>
<div class="t b c" style="left:115px;top:256px;width:54px;height:14px;line-height:14px;color:#000;">-0.46%</div>
<div style="left:171px;top:256px;width:59px;height:15px;background:#FF0000;border-right:1px solid #ACA899;border-bottom:1px solid #ACA899;"></div>
<div class="t b c" style="left:171px;top:256px;width:58px;height:14px;line-height:14px;color:#000;">1.161</div>
<div style="left:231px;top:256px;width:55px;height:15px;background:#00FF00;border-right:1px solid #ACA899;border-bottom:1px solid #ACA899;"></div>
<div class="t b c" style="left:231px;top:256px;width:54px;height:14px;line-height:14px;color:#000;">1.00</div>
<div style="left:9px;top:272px;width:49px;height:15px;background:#000;border-right:1px solid #ACA899;border-bottom:1px solid #ACA899;"></div>
<div class="t b c" style="left:9px;top:272px;width:48px;height:14px;line-height:14px;color:#00FF00;">0</div>
<div style="left:59px;top:272px;width:55px;height:15px;background:#FF0000;border-right:1px solid #ACA899;border-bottom:1px solid #ACA899;"></div>
<div class="t b c" style="left:59px;top:272px;width:54px;height:14px;line-height:14px;color:#000;">28.05%</div>
<div style="left:115px;top:272px;width:55px;height:15px;background:#FF0000;border-right:1px solid #ACA899;border-bottom:1px solid #ACA899;"></div>
<div class="t b c" style="left:115px;top:272px;width:54px;height:14px;line-height:14px;color:#000;">-0.22%</div>
<div style="left:171px;top:272px;width:59px;height:15px;background:#FF0000;border-right:1px solid #ACA899;border-bottom:1px solid #ACA899;"></div>
<div class="t b c" style="left:171px;top:272px;width:58px;height:14px;line-height:14px;color:#000;">1.160</div>
<div style="left:231px;top:272px;width:55px;height:15px;background:#00FF00;border-right:1px solid #ACA899;border-bottom:1px solid #ACA899;"></div>
<div class="t b c" style="left:231px;top:272px;width:54px;height:14px;line-height:14px;color:#000;">1.00</div>
<div style="left:9px;top:288px;width:49px;height:15px;background:#000;border-right:1px solid #ACA899;border-bottom:1px solid #ACA899;"></div>
<div class="t b c" style="left:9px;top:288px;width:48px;height:14px;line-height:14px;color:#00FF00;">1</div>
<div style="left:59px;top:288px;width:55px;height:15px;background:#C0C0C0;border-right:1px solid #ACA899;border-bottom:1px solid #ACA899;"></div>
<div class="t b c" style="left:59px;top:288px;width:54px;height:14px;line-height:14px;color:#000;">14.04%</div>
<div style="left:115px;top:288px;width:55px;height:15px;background:#C0C0C0;border-right:1px solid #ACA899;border-bottom:1px solid #ACA899;"></div>
<div class="t b c" style="left:115px;top:288px;width:54px;height:14px;line-height:14px;color:#000;">0.12%</div>
<div style="left:171px;top:288px;width:59px;height:15px;background:#C0C0C0;border-right:1px solid #ACA899;border-bottom:1px solid #ACA899;"></div>
<div class="t b c" style="left:171px;top:288px;width:58px;height:14px;line-height:14px;color:#000;">1.160</div>
<div style="left:231px;top:288px;width:55px;height:15px;background:#00FF00;border-right:1px solid #ACA899;border-bottom:1px solid #ACA899;"></div>
<div class="t b c" style="left:231px;top:288px;width:54px;height:14px;line-height:14px;color:#000;">1.00</div>
<div style="left:9px;top:304px;width:49px;height:15px;background:#000;border-right:1px solid #ACA899;border-bottom:1px solid #ACA899;"></div>
<div class="t b c" style="left:9px;top:304px;width:48px;height:14px;line-height:14px;color:#00FF00;">2</div>
<div style="left:59px;top:304px;width:55px;height:15px;background:#C0C0C0;border-right:1px solid #ACA899;border-bottom:1px solid #ACA899;"></div>
<div class="t b c" style="left:59px;top:304px;width:54px;height:14px;line-height:14px;color:#000;">11.60%</div>
<div style="left:115px;top:304px;width:55px;height:15px;background:#C0C0C0;border-right:1px solid #ACA899;border-bottom:1px solid #ACA899;"></div>
<div class="t b c" style="left:115px;top:304px;width:54px;height:14px;line-height:14px;color:#000;">0.43%</div>
<div style="left:171px;top:304px;width:59px;height:15px;background:#C0C0C0;border-right:1px solid #ACA899;border-bottom:1px solid #ACA899;"></div>
<div class="t b c" style="left:171px;top:304px;width:58px;height:14px;line-height:14px;color:#000;">1.158</div>
<div style="left:231px;top:304px;width:55px;height:15px;background:#00FF00;border-right:1px solid #ACA899;border-bottom:1px solid #ACA899;"></div>
<div class="t b c" style="left:231px;top:304px;width:54px;height:14px;line-height:14px;color:#000;">2.38</div>
<div style="left:9px;top:320px;width:49px;height:15px;background:#000;border-right:1px solid #ACA899;border-bottom:1px solid #ACA899;"></div>
<div class="t b c" style="left:9px;top:320px;width:48px;height:14px;line-height:14px;color:#00FF00;">3</div>
<div style="left:59px;top:320px;width:55px;height:15px;background:#C0C0C0;border-right:1px solid #ACA899;border-bottom:1px solid #ACA899;"></div>
<div class="t b c" style="left:59px;top:320px;width:54px;height:14px;line-height:14px;color:#000;">7.12%</div>
<div style="left:115px;top:320px;width:55px;height:15px;background:#C0C0C0;border-right:1px solid #ACA899;border-bottom:1px solid #ACA899;"></div>
<div class="t b c" style="left:115px;top:320px;width:54px;height:14px;line-height:14px;color:#000;">0.71%</div>
<div style="left:171px;top:320px;width:59px;height:15px;background:#C0C0C0;border-right:1px solid #ACA899;border-bottom:1px solid #ACA899;"></div>
<div class="t b c" style="left:171px;top:320px;width:58px;height:14px;line-height:14px;color:#000;">1.156</div>
<div style="left:231px;top:320px;width:55px;height:15px;background:#00FF00;border-right:1px solid #ACA899;border-bottom:1px solid #ACA899;"></div>
<div class="t b c" style="left:231px;top:320px;width:54px;height:14px;line-height:14px;color:#000;">3.97</div>
<div style="left:9px;top:336px;width:49px;height:15px;background:#000;border-right:1px solid #ACA899;border-bottom:1px solid #ACA899;"></div>
<div class="t b c" style="left:9px;top:336px;width:48px;height:14px;line-height:14px;color:#00FF00;">4</div>
<div style="left:59px;top:336px;width:55px;height:15px;background:#C0C0C0;border-right:1px solid #ACA899;border-bottom:1px solid #ACA899;"></div>
<div class="t b c" style="left:59px;top:336px;width:54px;height:14px;line-height:14px;color:#000;">6.08%</div>
<div style="left:115px;top:336px;width:55px;height:15px;background:#C0C0C0;border-right:1px solid #ACA899;border-bottom:1px solid #ACA899;"></div>
<div class="t b c" style="left:115px;top:336px;width:54px;height:14px;line-height:14px;color:#000;">1.03%</div>
<div style="left:171px;top:336px;width:59px;height:15px;background:#C0C0C0;border-right:1px solid #ACA899;border-bottom:1px solid #ACA899;"></div>
<div class="t b c" style="left:171px;top:336px;width:58px;height:14px;line-height:14px;color:#000;">1.155</div>
<div style="left:231px;top:336px;width:55px;height:15px;background:#00FF00;border-right:1px solid #ACA899;border-bottom:1px solid #ACA899;"></div>
<div class="t b c" style="left:231px;top:336px;width:54px;height:14px;line-height:14px;color:#000;">5.81</div>
<div style="left:9px;top:352px;width:49px;height:15px;background:#000;border-right:1px solid #ACA899;border-bottom:1px solid #ACA899;"></div>
<div class="t b c" style="left:9px;top:352px;width:48px;height:14px;line-height:14px;color:#00FF00;">5</div>
<div style="left:59px;top:352px;width:55px;height:15px;background:#C0C0C0;border-right:1px solid #ACA899;border-bottom:1px solid #ACA899;"></div>
<div class="t b c" style="left:59px;top:352px;width:54px;height:14px;line-height:14px;color:#000;">3.70%</div>
<div style="left:115px;top:352px;width:55px;height:15px;background:#C0C0C0;border-right:1px solid #ACA899;border-bottom:1px solid #ACA899;"></div>
<div class="t b c" style="left:115px;top:352px;width:54px;height:14px;line-height:14px;color:#000;">1.31%</div>
<div style="left:171px;top:352px;width:59px;height:15px;background:#C0C0C0;border-right:1px solid #ACA899;border-bottom:1px solid #ACA899;"></div>
<div class="t b c" style="left:171px;top:352px;width:58px;height:14px;line-height:14px;color:#000;">1.155</div>
<div style="left:231px;top:352px;width:55px;height:15px;background:#00FF00;border-right:1px solid #ACA899;border-bottom:1px solid #ACA899;"></div>
<div class="t b c" style="left:231px;top:352px;width:54px;height:14px;line-height:14px;color:#000;">7.38</div>
<div style="left:9px;top:368px;width:49px;height:15px;background:#000;border-right:1px solid #ACA899;border-bottom:1px solid #ACA899;"></div>
<div class="t b c" style="left:9px;top:368px;width:48px;height:14px;line-height:14px;color:#00FF00;">6</div>
<div style="left:59px;top:368px;width:55px;height:15px;background:#C0C0C0;border-right:1px solid #ACA899;border-bottom:1px solid #ACA899;"></div>
<div class="t b c" style="left:59px;top:368px;width:54px;height:14px;line-height:14px;color:#000;">3.27%</div>
<div style="left:115px;top:368px;width:55px;height:15px;background:#C0C0C0;border-right:1px solid #ACA899;border-bottom:1px solid #ACA899;"></div>
<div class="t b c" style="left:115px;top:368px;width:54px;height:14px;line-height:14px;color:#000;">1.63%</div>
<div style="left:171px;top:368px;width:59px;height:15px;background:#C0C0C0;border-right:1px solid #ACA899;border-bottom:1px solid #ACA899;"></div>
<div class="t b c" style="left:171px;top:368px;width:58px;height:14px;line-height:14px;color:#000;">1.155</div>
<div style="left:231px;top:368px;width:55px;height:15px;background:#00FF00;border-right:1px solid #ACA899;border-bottom:1px solid #ACA899;"></div>
<div class="t b c" style="left:231px;top:368px;width:54px;height:14px;line-height:14px;color:#000;">9.17</div>
<div style="left:9px;top:384px;width:49px;height:15px;background:#000;border-right:1px solid #ACA899;border-bottom:1px solid #ACA899;"></div>
<div class="t b c" style="left:9px;top:384px;width:48px;height:14px;line-height:14px;color:#00FF00;">7</div>
<div style="left:59px;top:384px;width:55px;height:15px;background:#C0C0C0;border-right:1px solid #ACA899;border-bottom:1px solid #ACA899;"></div>
<div class="t b c" style="left:59px;top:384px;width:54px;height:14px;line-height:14px;color:#000;">1.98%</div>
<div style="left:115px;top:384px;width:55px;height:15px;background:#C0C0C0;border-right:1px solid #ACA899;border-bottom:1px solid #ACA899;"></div>
<div class="t b c" style="left:115px;top:384px;width:54px;height:14px;line-height:14px;color:#000;">1.96%</div>
<div style="left:171px;top:384px;width:59px;height:15px;background:#C0C0C0;border-right:1px solid #ACA899;border-bottom:1px solid #ACA899;"></div>
<div class="t b c" style="left:171px;top:384px;width:58px;height:14px;line-height:14px;color:#000;">1.155</div>
<div style="left:231px;top:384px;width:55px;height:15px;background:#00FF00;border-right:1px solid #ACA899;border-bottom:1px solid #ACA899;"></div>
<div class="t b c" style="left:231px;top:384px;width:54px;height:14px;line-height:14px;color:#000;">11.01</div>
<div style="left:9px;top:400px;width:49px;height:15px;background:#000;border-right:1px solid #ACA899;border-bottom:1px solid #ACA899;"></div>
<div class="t b c" style="left:9px;top:400px;width:48px;height:14px;line-height:14px;color:#00FF00;">8</div>
<div style="left:59px;top:400px;width:55px;height:15px;background:#C0C0C0;border-right:1px solid #ACA899;border-bottom:1px solid #ACA899;"></div>
<div class="t b c" style="left:59px;top:400px;width:54px;height:14px;line-height:14px;color:#000;">1.80%</div>
<div style="left:115px;top:400px;width:55px;height:15px;background:#C0C0C0;border-right:1px solid #ACA899;border-bottom:1px solid #ACA899;"></div>
<div class="t b c" style="left:115px;top:400px;width:54px;height:14px;line-height:14px;color:#000;">2.31%</div>
<div style="left:171px;top:400px;width:59px;height:15px;background:#C0C0C0;border-right:1px solid #ACA899;border-bottom:1px solid #ACA899;"></div>
<div class="t b c" style="left:171px;top:400px;width:58px;height:14px;line-height:14px;color:#000;">1.153</div>
<div style="left:231px;top:400px;width:55px;height:15px;background:#00FF00;border-right:1px solid #ACA899;border-bottom:1px solid #ACA899;"></div>
<div class="t b c" style="left:231px;top:400px;width:54px;height:14px;line-height:14px;color:#000;">12.00</div>
<div style="left:9px;top:416px;width:49px;height:15px;background:#000;border-right:1px solid #ACA899;border-bottom:1px solid #ACA899;"></div>
<div class="t b c" style="left:9px;top:416px;width:48px;height:14px;line-height:14px;color:#00FF00;">9</div>
<div style="left:59px;top:416px;width:55px;height:15px;background:#C0C0C0;border-right:1px solid #ACA899;border-bottom:1px solid #ACA899;"></div>
<div class="t b c" style="left:59px;top:416px;width:54px;height:14px;line-height:14px;color:#000;">.99%</div>
<div style="left:115px;top:416px;width:55px;height:15px;background:#C0C0C0;border-right:1px solid #ACA899;border-bottom:1px solid #ACA899;"></div>
<div class="t b c" style="left:115px;top:416px;width:54px;height:14px;line-height:14px;color:#000;">2.61%</div>
<div style="left:171px;top:416px;width:59px;height:15px;background:#C0C0C0;border-right:1px solid #ACA899;border-bottom:1px solid #ACA899;"></div>
<div class="t b c" style="left:171px;top:416px;width:58px;height:14px;line-height:14px;color:#000;">1.151</div>
<div style="left:231px;top:416px;width:55px;height:15px;background:#00FF00;border-right:1px solid #ACA899;border-bottom:1px solid #ACA899;"></div>
<div class="t b c" style="left:231px;top:416px;width:54px;height:14px;line-height:14px;color:#000;">12.00</div>
<div style="left:9px;top:432px;width:49px;height:15px;background:#000;border-right:1px solid #ACA899;border-bottom:1px solid #ACA899;"></div>
<div class="t b c" style="left:9px;top:432px;width:48px;height:14px;line-height:14px;color:#00FF00;">10</div>
<div style="left:59px;top:432px;width:55px;height:15px;background:#C0C0C0;border-right:1px solid #ACA899;border-bottom:1px solid #ACA899;"></div>
<div class="t b c" style="left:59px;top:432px;width:54px;height:14px;line-height:14px;color:#000;">.97%</div>
<div style="left:115px;top:432px;width:55px;height:15px;background:#C0C0C0;border-right:1px solid #ACA899;border-bottom:1px solid #ACA899;"></div>
<div class="t b c" style="left:115px;top:432px;width:54px;height:14px;line-height:14px;color:#000;">2.93%</div>
<div style="left:171px;top:432px;width:59px;height:15px;background:#C0C0C0;border-right:1px solid #ACA899;border-bottom:1px solid #ACA899;"></div>
<div class="t b c" style="left:171px;top:432px;width:58px;height:14px;line-height:14px;color:#000;">1.147</div>
<div style="left:231px;top:432px;width:55px;height:15px;background:#00FF00;border-right:1px solid #ACA899;border-bottom:1px solid #ACA899;"></div>
<div class="t b c" style="left:231px;top:432px;width:54px;height:14px;line-height:14px;color:#000;">12.00</div>
<div style="left:9px;top:448px;width:49px;height:15px;background:#000;border-right:1px solid #ACA899;border-bottom:1px solid #ACA899;"></div>
<div class="t b c" style="left:9px;top:448px;width:48px;height:14px;line-height:14px;color:#00FF00;">11</div>
<div style="left:59px;top:448px;width:55px;height:15px;background:#C0C0C0;border-right:1px solid #ACA899;border-bottom:1px solid #ACA899;"></div>
<div class="t b c" style="left:59px;top:448px;width:54px;height:14px;line-height:14px;color:#000;">.59%</div>
<div style="left:115px;top:448px;width:55px;height:15px;background:#C0C0C0;border-right:1px solid #ACA899;border-bottom:1px solid #ACA899;"></div>
<div class="t b c" style="left:115px;top:448px;width:54px;height:14px;line-height:14px;color:#000;">3.28%</div>
<div style="left:171px;top:448px;width:59px;height:15px;background:#C0C0C0;border-right:1px solid #ACA899;border-bottom:1px solid #ACA899;"></div>
<div class="t b c" style="left:171px;top:448px;width:58px;height:14px;line-height:14px;color:#000;">1.143</div>
<div style="left:231px;top:448px;width:55px;height:15px;background:#00FF00;border-right:1px solid #ACA899;border-bottom:1px solid #ACA899;"></div>
<div class="t b c" style="left:231px;top:448px;width:54px;height:14px;line-height:14px;color:#000;">12.00</div>
<div style="left:9px;top:464px;width:49px;height:15px;background:#000;border-right:1px solid #ACA899;border-bottom:1px solid #ACA899;"></div>
<div class="t b c" style="left:9px;top:464px;width:48px;height:14px;line-height:14px;color:#00FF00;">12</div>
<div style="left:59px;top:464px;width:55px;height:15px;background:#C0C0C0;border-right:1px solid #ACA899;border-bottom:1px solid #ACA899;"></div>
<div class="t b c" style="left:59px;top:464px;width:54px;height:14px;line-height:14px;color:#000;">.45%</div>
<div style="left:115px;top:464px;width:55px;height:15px;background:#C0C0C0;border-right:1px solid #ACA899;border-bottom:1px solid #ACA899;"></div>
<div class="t b c" style="left:115px;top:464px;width:54px;height:14px;line-height:14px;color:#000;">3.51%</div>
<div style="left:171px;top:464px;width:59px;height:15px;background:#C0C0C0;border-right:1px solid #ACA899;border-bottom:1px solid #ACA899;"></div>
<div class="t b c" style="left:171px;top:464px;width:58px;height:14px;line-height:14px;color:#000;">1.141</div>
<div style="left:231px;top:464px;width:55px;height:15px;background:#00FF00;border-right:1px solid #ACA899;border-bottom:1px solid #ACA899;"></div>
<div class="t b c" style="left:231px;top:464px;width:54px;height:14px;line-height:14px;color:#000;">12.00</div>
<div style="left:9px;top:480px;width:49px;height:15px;background:#000;border-right:1px solid #ACA899;border-bottom:1px solid #ACA899;"></div>
<div class="t b c" style="left:9px;top:480px;width:48px;height:14px;line-height:14px;color:#00FF00;">13</div>
<div style="left:59px;top:480px;width:55px;height:15px;background:#C0C0C0;border-right:1px solid #ACA899;border-bottom:1px solid #ACA899;"></div>
<div class="t b c" style="left:59px;top:480px;width:54px;height:14px;line-height:14px;color:#000;">.25%</div>
<div style="left:115px;top:480px;width:55px;height:15px;background:#C0C0C0;border-right:1px solid #ACA899;border-bottom:1px solid #ACA899;"></div>
<div class="t b c" style="left:115px;top:480px;width:54px;height:14px;line-height:14px;color:#000;">3.77%</div>
<div style="left:171px;top:480px;width:59px;height:15px;background:#C0C0C0;border-right:1px solid #ACA899;border-bottom:1px solid #ACA899;"></div>
<div class="t b c" style="left:171px;top:480px;width:58px;height:14px;line-height:14px;color:#000;">1.137</div>
<div style="left:231px;top:480px;width:55px;height:15px;background:#00FF00;border-right:1px solid #ACA899;border-bottom:1px solid #ACA899;"></div>
<div class="t b c" style="left:231px;top:480px;width:54px;height:14px;line-height:14px;color:#000;">12.00</div>
<div style="left:9px;top:496px;width:49px;height:15px;background:#000;border-right:1px solid #ACA899;border-bottom:1px solid #ACA899;"></div>
<div class="t b c" style="left:9px;top:496px;width:48px;height:14px;line-height:14px;color:#00FF00;">14</div>
<div style="left:59px;top:496px;width:55px;height:15px;background:#C0C0C0;border-right:1px solid #ACA899;border-bottom:1px solid #ACA899;"></div>
<div class="t b c" style="left:59px;top:496px;width:54px;height:14px;line-height:14px;color:#000;">.30%</div>
<div style="left:115px;top:496px;width:55px;height:15px;background:#C0C0C0;border-right:1px solid #ACA899;border-bottom:1px solid #ACA899;"></div>
<div class="t b c" style="left:115px;top:496px;width:54px;height:14px;line-height:14px;color:#000;">4.14%</div>
<div style="left:171px;top:496px;width:59px;height:15px;background:#C0C0C0;border-right:1px solid #ACA899;border-bottom:1px solid #ACA899;"></div>
<div class="t b c" style="left:171px;top:496px;width:58px;height:14px;line-height:14px;color:#000;">1.132</div>
<div style="left:231px;top:496px;width:55px;height:15px;background:#00FF00;border-right:1px solid #ACA899;border-bottom:1px solid #ACA899;"></div>
<div class="t b c" style="left:231px;top:496px;width:54px;height:14px;line-height:14px;color:#000;">12.00</div>
<div style="left:9px;top:512px;width:49px;height:15px;background:#000;border-right:1px solid #ACA899;border-bottom:1px solid #ACA899;"></div>
<div class="t b c" style="left:9px;top:512px;width:48px;height:14px;line-height:14px;color:#00FF00;">15</div>
<div style="left:59px;top:512px;width:55px;height:15px;background:#C0C0C0;border-right:1px solid #ACA899;border-bottom:1px solid #ACA899;"></div>
<div class="t b c" style="left:59px;top:512px;width:54px;height:14px;line-height:14px;color:#000;">.11%</div>
<div style="left:115px;top:512px;width:55px;height:15px;background:#C0C0C0;border-right:1px solid #ACA899;border-bottom:1px solid #ACA899;"></div>
<div class="t b c" style="left:115px;top:512px;width:54px;height:14px;line-height:14px;color:#000;">4.34%</div>
<div style="left:171px;top:512px;width:59px;height:15px;background:#C0C0C0;border-right:1px solid #ACA899;border-bottom:1px solid #ACA899;"></div>
<div class="t b c" style="left:171px;top:512px;width:58px;height:14px;line-height:14px;color:#000;">1.130</div>
<div style="left:231px;top:512px;width:55px;height:15px;background:#00FF00;border-right:1px solid #ACA899;border-bottom:1px solid #ACA899;"></div>
<div class="t b c" style="left:231px;top:512px;width:54px;height:14px;line-height:14px;color:#000;">12.00</div>
<div style="left:9px;top:528px;width:49px;height:15px;background:#000;border-right:1px solid #ACA899;border-bottom:1px solid #ACA899;"></div>
<div class="t b c" style="left:9px;top:528px;width:48px;height:14px;line-height:14px;color:#00FF00;">&gt;=16</div>
<div style="left:59px;top:528px;width:55px;height:15px;background:#C0C0C0;border-right:1px solid #ACA899;border-bottom:1px solid #ACA899;"></div>
<div class="t b c" style="left:59px;top:528px;width:54px;height:14px;line-height:14px;color:#000;">.36%</div>
<div style="left:115px;top:528px;width:55px;height:15px;background:#C0C0C0;border-right:1px solid #ACA899;border-bottom:1px solid #ACA899;"></div>
<div class="t b c" style="left:115px;top:528px;width:54px;height:14px;line-height:14px;color:#000;">5.06%</div>
<div style="left:171px;top:528px;width:59px;height:15px;background:#C0C0C0;border-right:1px solid #ACA899;border-bottom:1px solid #ACA899;"></div>
<div class="t b c" style="left:171px;top:528px;width:58px;height:14px;line-height:14px;color:#000;">1.121</div>
<div style="left:231px;top:528px;width:55px;height:15px;background:#00FF00;border-right:1px solid #ACA899;border-bottom:1px solid #ACA899;"></div>
<div class="t b c" style="left:231px;top:528px;width:54px;height:14px;line-height:14px;color:#000;">12.00</div>
<div style="left:287px;top:240px;width:71px;height:15px;background:#00FF00;border-right:1px solid #ACA899;border-bottom:1px solid #ACA899;"></div>
<div style="left:287px;top:256px;width:71px;height:47px;background:#00FF00;border-right:1px solid #ACA899;border-bottom:1px solid #ACA899;"></div>
<div class="t b c" style="left:287px;top:272px;width:70px;height:14px;line-height:14px;color:#000;">2x50</div>
<div style="left:287px;top:304px;width:71px;height:15px;background:#00FF00;border-right:1px solid #ACA899;border-bottom:1px solid #ACA899;"></div>
<div class="t b c" style="left:287px;top:304px;width:70px;height:14px;line-height:14px;color:#000;">2x125</div>
<div style="left:287px;top:320px;width:71px;height:15px;background:#00FF00;border-right:1px solid #ACA899;border-bottom:1px solid #ACA899;"></div>
<div class="t b c" style="left:287px;top:320px;width:70px;height:14px;line-height:14px;color:#000;">2x200</div>
<div style="left:287px;top:336px;width:71px;height:15px;background:#00FF00;border-right:1px solid #ACA899;border-bottom:1px solid #ACA899;"></div>
<div class="t b c" style="left:287px;top:336px;width:70px;height:14px;line-height:14px;color:#000;">2x300</div>
<div style="left:287px;top:352px;width:71px;height:15px;background:#00FF00;border-right:1px solid #ACA899;border-bottom:1px solid #ACA899;"></div>
<div class="t b c" style="left:287px;top:352px;width:70px;height:14px;line-height:14px;color:#000;">2x400</div>
<div style="left:287px;top:368px;width:71px;height:31px;background:#00FF00;border-right:1px solid #ACA899;border-bottom:1px solid #ACA899;"></div>
<div class="t b c" style="left:287px;top:376px;width:70px;height:14px;line-height:14px;color:#000;">2x500</div>
<div style="left:287px;top:400px;width:71px;height:143px;background:#00FF00;border-right:1px solid #ACA899;border-bottom:1px solid #ACA899;"></div>
<div class="t b c" style="left:287px;top:464px;width:70px;height:14px;line-height:14px;color:#000;">2x600</div>
<div style="left:363px;top:206px;width:69px;height:393px;background:#fff;border-top:1px solid #ACA899;border-left:1px solid #ACA899;border-bottom:1px solid #fff;border-right:1px solid #fff;"></div>
<div style="left:364px;top:207px;width:67px;height:391px;border-top:1px solid #C9C7BA;border-left:1px solid #C9C7BA;border-bottom:1px solid #ECE9D8;border-right:1px solid #ECE9D8;background:#fff;"></div>
<div style="left:365px;top:544px;width:65px;height:53px;background:#808080;"></div>
<div style="left:366px;top:208px;width:63px;height:15px;background:#000;border-right:1px solid #ACA899;border-bottom:1px solid #ACA899;"></div>
<div class="t b c" style="left:366px;top:208px;width:62px;height:14px;line-height:14px;color:#00FF00;">Custom</div>
<div style="left:366px;top:224px;width:63px;height:15px;background:#000;border-right:1px solid #ACA899;border-bottom:1px solid #ACA899;"></div>
<div class="t b c" style="left:366px;top:224px;width:62px;height:14px;line-height:14px;color:#00FF00;">Bets</div>
<div style="left:366px;top:240px;width:63px;height:15px;background:#FFFFF5;border-right:1px solid #ACA899;border-bottom:1px solid #ACA899;"></div>
<div style="left:366px;top:256px;width:63px;height:15px;background:#FFFFF5;border-right:1px solid #ACA899;border-bottom:1px solid #ACA899;"></div>
<div class="t b c" style="left:366px;top:256px;width:62px;height:14px;line-height:14px;color:#000;">2x50</div>
<div style="left:366px;top:272px;width:63px;height:15px;background:#FFFFF5;border-right:1px solid #ACA899;border-bottom:1px solid #ACA899;"></div>
<div class="t b c" style="left:366px;top:272px;width:62px;height:14px;line-height:14px;color:#000;">2x50</div>
<div style="left:366px;top:288px;width:63px;height:15px;background:#FFFFF5;border-right:1px solid #ACA899;border-bottom:1px solid #ACA899;"></div>
<div class="t b c" style="left:366px;top:288px;width:62px;height:14px;line-height:14px;color:#000;">2x50</div>
<div style="left:366px;top:304px;width:63px;height:15px;background:#FFFFF5;border-right:1px solid #ACA899;border-bottom:1px solid #ACA899;"></div>
<div class="t b c" style="left:366px;top:304px;width:62px;height:14px;line-height:14px;color:#000;">2x125</div>
<div style="left:366px;top:320px;width:63px;height:15px;background:#FFFFF5;border-right:1px solid #ACA899;border-bottom:1px solid #ACA899;"></div>
<div class="t b c" style="left:366px;top:320px;width:62px;height:14px;line-height:14px;color:#000;">2x200</div>
<div style="left:366px;top:336px;width:63px;height:15px;background:#FFFFF5;border-right:1px solid #ACA899;border-bottom:1px solid #ACA899;"></div>
<div class="t b c" style="left:366px;top:336px;width:62px;height:14px;line-height:14px;color:#000;">2x300</div>
<div style="left:366px;top:352px;width:63px;height:15px;background:#FFFFF5;border-right:1px solid #ACA899;border-bottom:1px solid #ACA899;"></div>
<div class="t b c" style="left:366px;top:352px;width:62px;height:14px;line-height:14px;color:#000;">2x400</div>
<div style="left:366px;top:368px;width:63px;height:15px;background:#FFFFF5;border-right:1px solid #ACA899;border-bottom:1px solid #ACA899;"></div>
<div class="t b c" style="left:366px;top:368px;width:62px;height:14px;line-height:14px;color:#000;">2x500</div>
<div style="left:366px;top:384px;width:63px;height:15px;background:#FFFFF5;border-right:1px solid #ACA899;border-bottom:1px solid #ACA899;"></div>
<div class="t b c" style="left:366px;top:384px;width:62px;height:14px;line-height:14px;color:#000;">2x500</div>
<div style="left:366px;top:400px;width:63px;height:15px;background:#FFFFF5;border-right:1px solid #ACA899;border-bottom:1px solid #ACA899;"></div>
<div class="t b c" style="left:366px;top:400px;width:62px;height:14px;line-height:14px;color:#000;">2x600</div>
<div style="left:366px;top:416px;width:63px;height:15px;background:#FFFFF5;border-right:1px solid #ACA899;border-bottom:1px solid #ACA899;"></div>
<div class="t b c" style="left:366px;top:416px;width:62px;height:14px;line-height:14px;color:#000;">2x600</div>
<div style="left:366px;top:432px;width:63px;height:15px;background:#FFFFF5;border-right:1px solid #ACA899;border-bottom:1px solid #ACA899;"></div>
<div class="t b c" style="left:366px;top:432px;width:62px;height:14px;line-height:14px;color:#000;">2x600</div>
<div style="left:366px;top:448px;width:63px;height:15px;background:#FFFFF5;border-right:1px solid #ACA899;border-bottom:1px solid #ACA899;"></div>
<div class="t b c" style="left:366px;top:448px;width:62px;height:14px;line-height:14px;color:#000;">2x600</div>
<div style="left:366px;top:464px;width:63px;height:15px;background:#FFFFF5;border-right:1px solid #ACA899;border-bottom:1px solid #ACA899;"></div>
<div class="t b c" style="left:366px;top:464px;width:62px;height:14px;line-height:14px;color:#000;">2x600</div>
<div style="left:366px;top:480px;width:63px;height:15px;background:#FFFFF5;border-right:1px solid #ACA899;border-bottom:1px solid #ACA899;"></div>
<div class="t b c" style="left:366px;top:480px;width:62px;height:14px;line-height:14px;color:#000;">2x600</div>
<div style="left:366px;top:496px;width:63px;height:15px;background:#FFFFF5;border-right:1px solid #ACA899;border-bottom:1px solid #ACA899;"></div>
<div class="t b c" style="left:366px;top:496px;width:62px;height:14px;line-height:14px;color:#000;">2x600</div>
<div style="left:366px;top:512px;width:63px;height:15px;background:#FFFFF5;border-right:1px solid #ACA899;border-bottom:1px solid #ACA899;"></div>
<div class="t b c" style="left:366px;top:512px;width:62px;height:14px;line-height:14px;color:#000;">2x600</div>
<div style="left:366px;top:528px;width:63px;height:15px;background:#FFFFF5;border-right:1px solid #ACA899;border-bottom:1px solid #ACA899;"></div>
<div class="t b c" style="left:366px;top:528px;width:62px;height:14px;line-height:14px;color:#000;">2x600</div>
<div style="left:8px;top:542px;width:350px;height:2px;background:#000;"></div>
<div style="left:365px;top:542px;width:65px;height:2px;background:#000;"></div>
<div style="left:434px;top:194px;width:358px;height:269px;background:#FEE5CA;border-top:1px solid #A0AC9C;border-left:1px solid #A0AC9C;border-bottom:1px solid #fff;border-right:1px solid #fff;"></div>
<div class="t b l" style="left:436px;top:195px;width:200px;height:14px;line-height:14px;">Penetration Charts</div>
<div style="left:579px;top:194px;width:188px;height:20px;background:#FFFFF5;border-top:1px solid #ACA899;border-left:1px solid #ACA899;border-bottom:1px solid #fff;border-right:1px solid #fff;"></div>
<div style="left:580px;top:195px;width:186px;height:18px;border-top:1px solid #716F64;border-left:1px solid #716F64;border-bottom:1px solid #ECE9D8;border-right:1px solid #ECE9D8;"></div>
<div style="left:749px;top:196px;width:16px;height:16px;background:#ECE9D8;border-top:1px solid #fff;border-left:1px solid #fff;border-bottom:1px solid #716F64;border-right:1px solid #716F64;box-shadow:inset -1px -1px 0 #ACA899;"></div>
<div style="left:753px;top:203px;width:0;height:0;border-left:4px solid transparent;border-right:4px solid transparent;border-top:4px solid #000;"></div>
<div class="t b l" style="left:583px;top:197px;width:166px;height:14px;line-height:14px;">SCORE</div>
<div style="left:768px;top:195px;width:23px;height:23px;background:#ECE9D8;border-left:1px solid #fff;border-top:1px solid #fff;border-right:2px solid #A0AC9C;border-bottom:2px solid #A0AC9C;"></div>
<svg style="left:769px;top:195px" width="21" height="21" viewBox="0 0 21 21"><path d="M1.4 19.6 L8 13.4" stroke="#A8700C" stroke-width="3.2" stroke-linecap="round"/><path d="M1.4 19.3 L8 13.1" stroke="#F2C21E" stroke-width="1.7" stroke-linecap="round"/><path d="M8 13.4 L9.6 11.9" stroke="#9AAAD8" stroke-width="2.6"/><circle cx="13.5" cy="7.9" r="5.9" fill="#DCEBFF" stroke="#6E6EC4" stroke-width="1.2"/><circle cx="14.6" cy="6.6" r="3.4" fill="#F4FAFF" opacity="0.8"/><path d="M13.5 4.9 V10.9 M10.5 7.9 H16.5" stroke="#103C9C" stroke-width="2"/></svg>
<div style="left:462px;top:218px;width:1px;height:223px;background:#000;"></div>
<div style="left:462px;top:440px;width:327px;height:1px;background:#000;"></div>
<div class="t r11 r" style="left:436px;top:210px;width:19px;height:14px;line-height:14px;">160</div>
<div class="t r11 r" style="left:436px;top:237px;width:19px;height:14px;line-height:14px;">140</div>
<div class="t r11 r" style="left:436px;top:265px;width:19px;height:14px;line-height:14px;">120</div>
<div class="t r11 r" style="left:436px;top:293px;width:19px;height:14px;line-height:14px;">100</div>
<div class="t r11 r" style="left:436px;top:321px;width:19px;height:14px;line-height:14px;">80</div>
<div class="t r11 r" style="left:436px;top:349px;width:19px;height:14px;line-height:14px;">60</div>
<div class="t r11 r" style="left:436px;top:377px;width:19px;height:14px;line-height:14px;">40</div>
<div class="t r11 r" style="left:436px;top:405px;width:19px;height:14px;line-height:14px;">20</div>
<div class="t r11 r" style="left:436px;top:432px;width:19px;height:14px;line-height:14px;">0</div>
<svg style="left:0;top:0" width="979" height="677" viewBox="0 0 979 677" shape-rendering="crispEdges"><path d="M463 440 L463 405 L466 405 L466 404 L469 404 L469 403 L472 403 L472 403 L475 403 L475 402 L478 402 L478 401 L482 401 L482 401 L485 401 L485 400 L488 400 L488 400 L491 400 L491 399 L494 399 L494 398 L497 398 L497 398 L500 398 L500 397 L503 397 L503 396 L506 396 L506 395 L509 395 L509 395 L513 395 L513 394 L516 394 L516 393 L519 393 L519 393 L522 393 L522 392 L525 392 L525 391 L528 391 L528 390 L531 390 L531 390 L534 390 L534 389 L537 389 L537 388 L540 388 L540 387 L543 387 L543 386 L547 386 L547 386 L550 386 L550 385 L553 385 L553 384 L556 384 L556 383 L559 383 L559 382 L562 382 L562 381 L565 381 L565 381 L568 381 L568 380 L571 380 L571 379 L574 379 L574 378 L578 378 L578 377 L581 377 L581 376 L584 376 L584 375 L587 375 L587 375 L590 375 L590 374 L593 374 L593 373 L596 373 L596 372 L599 372 L599 371 L602 371 L602 370 L605 370 L605 369 L608 369 L608 368 L612 368 L612 367 L615 367 L615 366 L618 366 L618 365 L621 365 L621 364 L624 364 L624 363 L627 363 L627 362 L630 362 L630 360 L633 360 L633 359 L636 359 L636 357 L639 357 L639 356 L643 356 L643 354 L646 354 L646 352 L649 352 L649 351 L652 351 L652 349 L655 349 L655 348 L658 348 L658 346 L661 346 L661 345 L664 345 L664 343 L667 343 L667 342 L670 342 L670 340 L673 340 L673 339 L677 339 L677 337 L680 337 L680 336 L683 336 L683 334 L686 334 L686 333 L689 333 L689 331 L692 331 L692 329 L695 329 L695 327 L698 327 L698 325 L701 325 L701 323 L704 323 L704 321 L708 321 L708 319 L711 319 L711 317 L714 317 L714 315 L717 315 L717 313 L720 313 L720 311 L723 311 L723 309 L726 309 L726 306 L729 306 L729 303 L732 303 L732 300 L735 300 L735 297 L738 297 L738 293 L742 293 L742 290 L745 290 L745 287 L748 287 L748 284 L751 284 L751 281 L754 281 L754 278 L757 278 L757 275 L760 275 L760 271 L763 271 L763 268 L766 268 L766 265 L769 265 L769 261 L773 261 L773 258 L776 258 L776 254 L779 254 L779 249 L782 249 L782 245 L785 245 L785 241 L788 241 L788 440 Z" fill="#FF0000"/><rect x="624" y="363" width="2" height="77" fill="#0000FF"/></svg>
<div class="t r11 c" style="left:450px;top:445px;width:30px;height:14px;line-height:14px;">130</div>
<div class="t r11 c" style="left:468px;top:445px;width:30px;height:14px;line-height:14px;">124</div>
<div class="t r11 c" style="left:487px;top:445px;width:30px;height:14px;line-height:14px;">118</div>
<div class="t r11 c" style="left:505px;top:445px;width:30px;height:14px;line-height:14px;">112</div>
<div class="t r11 c" style="left:524px;top:445px;width:30px;height:14px;line-height:14px;">106</div>
<div class="t r11 c" style="left:542px;top:445px;width:30px;height:14px;line-height:14px;">100</div>
<div class="t r11 c" style="left:561px;top:445px;width:30px;height:14px;line-height:14px;">94</div>
<div class="t r11 c" style="left:580px;top:445px;width:30px;height:14px;line-height:14px;">88</div>
<div class="t r11 c" style="left:598px;top:445px;width:30px;height:14px;line-height:14px;">82</div>
<div class="t r11 c" style="left:617px;top:445px;width:30px;height:14px;line-height:14px;">76</div>
<div class="t r11 c" style="left:635px;top:445px;width:30px;height:14px;line-height:14px;">70</div>
<div class="t r11 c" style="left:654px;top:445px;width:30px;height:14px;line-height:14px;">64</div>
<div class="t r11 c" style="left:672px;top:445px;width:30px;height:14px;line-height:14px;">58</div>
<div class="t r11 c" style="left:691px;top:445px;width:30px;height:14px;line-height:14px;">52</div>
<div class="t r11 c" style="left:710px;top:445px;width:30px;height:14px;line-height:14px;">46</div>
<div class="t r11 c" style="left:728px;top:445px;width:30px;height:14px;line-height:14px;">40</div>
<div class="t r11 c" style="left:747px;top:445px;width:30px;height:14px;line-height:14px;">34</div>
<div class="t r11 c" style="left:765px;top:445px;width:30px;height:14px;line-height:14px;">28</div>
<div style="left:796px;top:194px;width:177px;height:133px;background:#FEE5CA;border-top:1px solid #A0AC9C;border-left:1px solid #A0AC9C;border-bottom:1px solid #fff;border-right:1px solid #fff;"></div>
<div class="t b l" style="left:798px;top:195px;width:200px;height:14px;line-height:14px;">Risk (Trip Ruin is first row)</div>
<div class="t b l" style="left:805px;top:218px;width:200px;height:14px;line-height:14px;">Goal to Win:</div>
<div style="left:883px;top:215px;width:84px;height:19px;background:#FFFFF5;border:1px solid #000;"></div>
<div class="t b c" style="left:884px;top:217px;width:82px;height:14px;line-height:14px;">500</div>
<div style="left:798px;top:244px;width:173px;height:81px;background:#fff;border-top:1px solid #ACA899;border-left:1px solid #ACA899;"></div>
<div style="left:800px;top:246px;width:57px;height:15px;background:#000;border-right:1px solid #ACA899;border-bottom:1px solid #ACA899;"></div>
<div class="t b c" style="left:800px;top:246px;width:56px;height:14px;line-height:14px;color:#00FF00;">Goal</div>
<div style="left:858px;top:246px;width:57px;height:15px;background:#000;border-right:1px solid #ACA899;border-bottom:1px solid #ACA899;"></div>
<div class="t b c" style="left:858px;top:246px;width:56px;height:14px;line-height:14px;color:#00FF00;">Hours</div>
<div style="left:916px;top:246px;width:55px;height:15px;background:#000;border-right:1px solid #ACA899;border-bottom:1px solid #ACA899;"></div>
<div class="t b c" style="left:916px;top:246px;width:54px;height:14px;line-height:14px;color:#00FF00;">Risk</div>
<div style="left:800px;top:262px;width:57px;height:15px;background:#000;border-right:1px solid #ACA899;border-bottom:1px solid #ACA899;"></div>
<div class="t b c" style="left:800px;top:262px;width:56px;height:14px;line-height:14px;color:#00FF00;">Infinite</div>
<div style="left:858px;top:262px;width:57px;height:15px;background:#000;border-right:1px solid #ACA899;border-bottom:1px solid #ACA899;"></div>
<div class="t b c" style="left:858px;top:262px;width:56px;height:14px;line-height:14px;color:#00FF00;">50</div>
<div style="left:916px;top:262px;width:55px;height:15px;background:#00FF00;border-right:1px solid #ACA899;border-bottom:1px solid #ACA899;"></div>
<div class="t b c" style="left:916px;top:262px;width:54px;height:14px;line-height:14px;color:#000;">53.524%</div>
<div style="left:800px;top:278px;width:57px;height:15px;background:#000;border-right:1px solid #ACA899;border-bottom:1px solid #ACA899;"></div>
<div class="t b c" style="left:800px;top:278px;width:56px;height:14px;line-height:14px;color:#00FF00;">Infinite</div>
<div style="left:858px;top:278px;width:57px;height:15px;background:#000;border-right:1px solid #ACA899;border-bottom:1px solid #ACA899;"></div>
<div class="t b c" style="left:858px;top:278px;width:56px;height:14px;line-height:14px;color:#00FF00;">Infinite</div>
<div style="left:916px;top:278px;width:55px;height:15px;background:#00FF00;border-right:1px solid #ACA899;border-bottom:1px solid #ACA899;"></div>
<div class="t b c" style="left:916px;top:278px;width:54px;height:14px;line-height:14px;color:#000;">65.35%</div>
<div style="left:800px;top:294px;width:57px;height:15px;background:#000;border-right:1px solid #ACA899;border-bottom:1px solid #ACA899;"></div>
<div class="t b c" style="left:800px;top:294px;width:56px;height:14px;line-height:14px;color:#00FF00;">500</div>
<div style="left:858px;top:294px;width:57px;height:15px;background:#000;border-right:1px solid #ACA899;border-bottom:1px solid #ACA899;"></div>
<div class="t b c" style="left:858px;top:294px;width:56px;height:14px;line-height:14px;color:#00FF00;">50</div>
<div style="left:916px;top:294px;width:55px;height:15px;background:#00FF00;border-right:1px solid #ACA899;border-bottom:1px solid #ACA899;"></div>
<div class="t b c" style="left:916px;top:294px;width:54px;height:14px;line-height:14px;color:#000;">3.82%</div>
<div style="left:800px;top:310px;width:57px;height:15px;background:#000;border-right:1px solid #ACA899;border-bottom:1px solid #ACA899;"></div>
<div class="t b c" style="left:800px;top:310px;width:56px;height:14px;line-height:14px;color:#00FF00;">500</div>
<div style="left:858px;top:310px;width:57px;height:15px;background:#000;border-right:1px solid #ACA899;border-bottom:1px solid #ACA899;"></div>
<div class="t b c" style="left:858px;top:310px;width:56px;height:14px;line-height:14px;color:#00FF00;">Infinite</div>
<div style="left:916px;top:310px;width:55px;height:15px;background:#00FF00;border-right:1px solid #ACA899;border-bottom:1px solid #ACA899;"></div>
<div class="t b c" style="left:916px;top:310px;width:54px;height:14px;line-height:14px;color:#000;">3.82%</div>
<div style="left:796px;top:329px;width:177px;height:133px;background:#FEE5CA;border-top:1px solid #A0AC9C;border-left:1px solid #A0AC9C;border-bottom:1px solid #fff;border-right:1px solid #fff;"></div>
<div class="t b l" style="left:798px;top:330px;width:200px;height:14px;line-height:14px;">Goals</div>
<div class="t b l" style="left:805px;top:354px;width:200px;height:14px;line-height:14px;">Goal to Win:</div>
<div style="left:883px;top:351px;width:84px;height:19px;background:#FFFFF5;border:1px solid #000;"></div>
<div class="t b c" style="left:884px;top:353px;width:82px;height:14px;line-height:14px;">500</div>
<div style="left:798px;top:380px;width:173px;height:81px;background:#fff;border-top:1px solid #ACA899;border-left:1px solid #ACA899;"></div>
<div style="left:800px;top:382px;width:42px;height:15px;background:#000;border-right:1px solid #ACA899;border-bottom:1px solid #ACA899;"></div>
<div class="t b c" style="left:800px;top:382px;width:41px;height:14px;line-height:14px;color:#00FF00;">Hours</div>
<div style="left:843px;top:382px;width:128px;height:15px;background:#000;border-right:1px solid #ACA899;border-bottom:1px solid #ACA899;"></div>
<div class="t b c" style="left:843px;top:382px;width:127px;height:14px;line-height:14px;color:#00FF00;">Odds of making Goal</div>
<div style="left:800px;top:398px;width:42px;height:15px;background:#000;border-right:1px solid #ACA899;border-bottom:1px solid #ACA899;"></div>
<div class="t b c" style="left:800px;top:398px;width:41px;height:14px;line-height:14px;color:#00FF00;">25</div>
<div style="left:843px;top:398px;width:128px;height:15px;background:#00FF00;border-right:1px solid #ACA899;border-bottom:1px solid #ACA899;"></div>
<div class="t b c" style="left:843px;top:398px;width:127px;height:14px;line-height:14px;color:#000;">96.18%</div>
<div style="left:800px;top:414px;width:42px;height:15px;background:#000;border-right:1px solid #ACA899;border-bottom:1px solid #ACA899;"></div>
<div class="t b c" style="left:800px;top:414px;width:41px;height:14px;line-height:14px;color:#00FF00;">50</div>
<div style="left:843px;top:414px;width:128px;height:15px;background:#00FF00;border-right:1px solid #ACA899;border-bottom:1px solid #ACA899;"></div>
<div class="t b c" style="left:843px;top:414px;width:127px;height:14px;line-height:14px;color:#000;">96.18%</div>
<div style="left:800px;top:430px;width:42px;height:15px;background:#000;border-right:1px solid #ACA899;border-bottom:1px solid #ACA899;"></div>
<div class="t b c" style="left:800px;top:430px;width:41px;height:14px;line-height:14px;color:#00FF00;">100</div>
<div style="left:843px;top:430px;width:128px;height:15px;background:#00FF00;border-right:1px solid #ACA899;border-bottom:1px solid #ACA899;"></div>
<div class="t b c" style="left:843px;top:430px;width:127px;height:14px;line-height:14px;color:#000;">96.18%</div>
<div style="left:800px;top:446px;width:42px;height:15px;background:#000;border-right:1px solid #ACA899;border-bottom:1px solid #ACA899;"></div>
<div class="t b c" style="left:800px;top:446px;width:41px;height:14px;line-height:14px;color:#00FF00;">INF</div>
<div style="left:843px;top:446px;width:128px;height:15px;background:#00FF00;border-right:1px solid #ACA899;border-bottom:1px solid #ACA899;"></div>
<div class="t b c" style="left:843px;top:446px;width:127px;height:14px;line-height:14px;color:#000;">96.18%</div>
<div style="left:434px;top:467px;width:177px;height:132px;background:#FEE5CA;border-top:1px solid #A0AC9C;border-left:1px solid #A0AC9C;border-bottom:1px solid #fff;border-right:1px solid #fff;"></div>
<div class="t b l" style="left:436px;top:468px;width:200px;height:14px;line-height:14px;">Actual Results</div>
<div class="t b l" style="left:440px;top:489px;width:200px;height:14px;line-height:14px;">Actual Result:</div>
<div class="t b l" style="left:440px;top:510px;width:200px;height:14px;line-height:14px;">Expected:</div>
<div class="t b l" style="left:440px;top:532px;width:200px;height:14px;line-height:14px;">Standard Dev:</div>
<div style="left:529px;top:486px;width:75px;height:19px;background:#FFFFF5;border:1px solid #000;"></div>
<div class="t b c" style="left:530px;top:488px;width:73px;height:14px;line-height:14px;">500</div>
<div style="left:529px;top:508px;width:72px;height:19px;border-top:1px solid #ACA899;border-left:1px solid #ACA899;border-bottom:1px solid #fff;border-right:1px solid #fff;"></div>
<div class="t b c" style="left:530px;top:511px;width:70px;height:14px;line-height:14px;">$13,041</div>
<div style="left:529px;top:529px;width:72px;height:19px;border-top:1px solid #ACA899;border-left:1px solid #ACA899;border-bottom:1px solid #fff;border-right:1px solid #fff;"></div>
<div class="t b c" style="left:530px;top:532px;width:70px;height:14px;line-height:14px;">-0.51</div>
<div style="left:529px;top:562px;width:72px;height:19px;border-top:1px solid #ACA899;border-left:1px solid #ACA899;border-bottom:1px solid #fff;border-right:1px solid #fff;"></div>
<div class="t b c" style="left:530px;top:565px;width:70px;height:14px;line-height:14px;">69.36%</div>
<div class="t b c" style="left:432px;top:555px;width:100px;height:14px;line-height:14px;">Probability of</div>
<div class="t b c" style="left:432px;top:568px;width:100px;height:14px;line-height:14px;">this result or</div>
<div class="t b c" style="left:432px;top:581px;width:100px;height:14px;line-height:14px;">better:</div>
<div style="left:615px;top:467px;width:177px;height:132px;background:#FEE5CA;border-top:1px solid #A0AC9C;border-left:1px solid #A0AC9C;border-bottom:1px solid #fff;border-right:1px solid #fff;"></div>
<div class="t b l" style="left:617px;top:468px;width:200px;height:14px;line-height:14px;">Actual Results Chart</div>
<svg style="left:0;top:0" width="979" height="677" viewBox="0 0 979 677"><path d="M691 596 L691 493.8 L692 492.3 L693 490.9 L694 489.6 L695 488.5 L696 487.4 L697 486.5 L698 485.8 L699 485.1 L700 484.6 L701 484.3 L702 484.1 L703 484.0 L704 484.1 L705 484.3 L706 484.6 L707 485.1 L708 485.8 L709 486.5 L710 487.4 L711 488.5 L712 489.6 L713 490.9 L714 492.3 L715 493.8 L716 495.4 L717 497.1 L718 498.9 L719 500.8 L720 502.8 L721 504.8 L722 506.9 L723 509.1 L724 511.3 L725 513.6 L726 515.9 L727 518.3 L728 520.7 L729 523.0 L730 525.5 L731 527.9 L732 530.3 L733 532.7 L734 535.1 L735 537.5 L736 539.8 L737 542.2 L738 544.5 L739 546.7 L740 548.9 L741 551.1 L742 553.2 L743 555.3 L744 557.3 L745 559.3 L746 561.2 L747 563.1 L748 564.9 L749 566.6 L750 568.2 L751 569.8 L752 571.4 L753 572.9 L754 574.3 L755 575.6 L756 576.9 L757 578.1 L758 579.3 L759 580.4 L760 581.5 L761 582.5 L762 583.4 L763 584.3 L764 585.1 L765 585.9 L766 586.6 L767 587.3 L768 588.0 L769 588.6 L770 589.1 L771 589.7 L772 590.1 L773 590.6 L774 591.0 L775 591.4 L776 591.8 L777 592.1 L778 592.4 L779 592.7 L780 593.0 L781 593.2 L782 593.4 L783 593.6 L784 593.8 L785 594.0 L786 594.1 L787 594.3 L787 596 Z" fill="#00FF00"/><path d="M619 596 L619 594.3 L620 594.1 L621 594.0 L622 593.8 L623 593.6 L624 593.4 L625 593.2 L626 593.0 L627 592.7 L628 592.4 L629 592.1 L630 591.8 L631 591.4 L632 591.0 L633 590.6 L634 590.1 L635 589.7 L636 589.1 L637 588.6 L638 588.0 L639 587.3 L640 586.6 L641 585.9 L642 585.1 L643 584.3 L644 583.4 L645 582.5 L646 581.5 L647 580.4 L648 579.3 L649 578.1 L650 576.9 L651 575.6 L652 574.3 L653 572.9 L654 571.4 L655 569.8 L656 568.2 L657 566.6 L658 564.9 L659 563.1 L660 561.2 L661 559.3 L662 557.3 L663 555.3 L664 553.2 L665 551.1 L666 548.9 L667 546.7 L668 544.5 L669 542.2 L670 539.8 L671 537.5 L672 535.1 L673 532.7 L674 530.3 L675 527.9 L676 525.5 L677 523.0 L678 520.7 L679 518.3 L680 515.9 L681 513.6 L682 511.3 L683 509.1 L684 506.9 L685 504.8 L686 502.8 L687 500.8 L688 498.9 L689 497.1 L690 495.4 L691 493.8 L691 596 Z" fill="#FF0000"/><rect x="619" y="595" width="169" height="1" fill="#FF0000"/></svg>
<div class="t r11 l" style="left:623px;top:560px;width:40px;height:14px;line-height:14px;">-3SD</div>
<div class="t r11 r" style="left:745px;top:560px;width:40px;height:14px;line-height:14px;">+3SD</div>
<div style="left:796px;top:467px;width:177px;height:132px;background:#FEE5CA;border-top:1px solid #A0AC9C;border-left:1px solid #A0AC9C;border-bottom:1px solid #fff;border-right:1px solid #fff;"></div>
<div class="t b l" style="left:798px;top:468px;width:200px;height:14px;line-height:14px;">Hours to Gain</div>
<div class="t b l" style="left:805px;top:487px;width:200px;height:14px;line-height:14px;">Hours/Day</div>
<div class="t b l" style="left:805px;top:509px;width:200px;height:14px;line-height:14px;">Expenses/Day</div>
<div style="left:898px;top:484px;width:67px;height:19px;background:#FFFFF5;border:1px solid #000;"></div>
<div style="left:952px;top:485px;width:1px;height:17px;background:#000;"></div>
<div style="left:941px;top:485px;width:1px;height:17px;background:#000;"></div>
<div style="left:942px;top:485px;width:10px;height:17px;background:#F6ECDA;border-top:2px solid #fff;border-left:2px solid #fff;border-bottom:2px solid #D3B48F;border-right:2px solid #D3B48F;"></div>
<div style="left:945px;top:488px;width:0;height:0;border-top:5.5px solid transparent;border-bottom:5.5px solid transparent;border-right:3px solid #4A0000;"></div>
<div style="left:953px;top:485px;width:11px;height:17px;background:#F6ECDA;border-top:2px solid #fff;border-left:2px solid #fff;border-bottom:2px solid #D3B48F;border-right:2px solid #D3B48F;"></div>
<div style="left:957px;top:488px;width:0;height:0;border-top:5.5px solid transparent;border-bottom:5.5px solid transparent;border-left:4px solid #4A0000;"></div>
<div class="t b c" style="left:899px;top:487px;width:42px;height:14px;line-height:14px;">8</div>
<div style="left:898px;top:506px;width:67px;height:19px;background:#FFFFF5;border:1px solid #000;"></div>
<div class="t b c" style="left:899px;top:508px;width:65px;height:14px;line-height:14px;">0</div>
<div style="left:798px;top:533px;width:173px;height:65px;background:#fff;border-top:1px solid #ACA899;border-left:1px solid #ACA899;"></div>
<div style="left:800px;top:535px;width:57px;height:15px;background:#000;border-right:1px solid #ACA899;border-bottom:1px solid #ACA899;"></div>
<div class="t b c" style="left:800px;top:535px;width:56px;height:14px;line-height:14px;color:#00FF00;">Gain</div>
<div style="left:858px;top:535px;width:57px;height:15px;background:#000;border-right:1px solid #ACA899;border-bottom:1px solid #ACA899;"></div>
<div class="t b c" style="left:858px;top:535px;width:56px;height:14px;line-height:14px;color:#00FF00;">Hours</div>
<div style="left:916px;top:535px;width:55px;height:15px;background:#000;border-right:1px solid #ACA899;border-bottom:1px solid #ACA899;"></div>
<div class="t b c" style="left:916px;top:535px;width:54px;height:14px;line-height:14px;color:#00FF00;">Days</div>
<div style="left:800px;top:551px;width:57px;height:15px;background:#000;border-right:1px solid #ACA899;border-bottom:1px solid #ACA899;"></div>
<div class="t b c" style="left:800px;top:551px;width:56px;height:14px;line-height:14px;color:#00FF00;">50%</div>
<div style="left:858px;top:551px;width:57px;height:15px;background:#00FF00;border-right:1px solid #ACA899;border-bottom:1px solid #ACA899;"></div>
<div class="t b c" style="left:858px;top:551px;width:56px;height:14px;line-height:14px;color:#000;">96</div>
<div style="left:916px;top:551px;width:55px;height:15px;background:#00FF00;border-right:1px solid #ACA899;border-bottom:1px solid #ACA899;"></div>
<div class="t b c" style="left:916px;top:551px;width:54px;height:14px;line-height:14px;color:#000;">12.0</div>
<div style="left:800px;top:567px;width:57px;height:15px;background:#000;border-right:1px solid #ACA899;border-bottom:1px solid #ACA899;"></div>
<div class="t b c" style="left:800px;top:567px;width:56px;height:14px;line-height:14px;color:#00FF00;">100%</div>
<div style="left:858px;top:567px;width:57px;height:15px;background:#00FF00;border-right:1px solid #ACA899;border-bottom:1px solid #ACA899;"></div>
<div class="t b c" style="left:858px;top:567px;width:56px;height:14px;line-height:14px;color:#000;">192</div>
<div style="left:916px;top:567px;width:55px;height:15px;background:#00FF00;border-right:1px solid #ACA899;border-bottom:1px solid #ACA899;"></div>
<div class="t b c" style="left:916px;top:567px;width:54px;height:14px;line-height:14px;color:#000;">24.0</div>
<div style="left:800px;top:583px;width:57px;height:15px;background:#000;border-right:1px solid #ACA899;border-bottom:1px solid #ACA899;"></div>
<div class="t b c" style="left:800px;top:583px;width:56px;height:14px;line-height:14px;color:#00FF00;">200%</div>
<div style="left:858px;top:583px;width:57px;height:15px;background:#00FF00;border-right:1px solid #ACA899;border-bottom:1px solid #ACA899;"></div>
<div class="t b c" style="left:858px;top:583px;width:56px;height:14px;line-height:14px;color:#000;">383</div>
<div style="left:916px;top:583px;width:55px;height:15px;background:#00FF00;border-right:1px solid #ACA899;border-bottom:1px solid #ACA899;"></div>
<div class="t b c" style="left:916px;top:583px;width:54px;height:14px;line-height:14px;color:#000;">47.9</div>
<div style="left:6px;top:605px;width:966px;height:66px;overflow:hidden;">
<div style="left:0px;top:0px;width:966px;height:66px;background:#fff;border-top:1px solid #ACA899;border-left:1px solid #ACA899;"></div>
<div style="left:1px;top:1px;width:965px;height:65px;background:#fff;border-top:1px solid #716F64;border-left:1px solid #716F64;"></div>
<div style="left:3px;top:2px;width:64px;height:15px;background:#000;border-right:1px solid #ACA899;border-bottom:1px solid #ACA899;"></div>
<div style="left:3px;top:18px;width:64px;height:15px;background:#000;border-right:1px solid #ACA899;border-bottom:1px solid #ACA899;"></div>
<div class="t b c" style="left:3px;top:18px;width:63px;height:14px;line-height:14px;color:#00FF00;">Bets</div>
<div style="left:68px;top:2px;width:64px;height:31px;background:#000;border-right:1px solid #ACA899;border-bottom:1px solid #ACA899;"></div>
<div class="t b c" style="left:68px;top:4px;width:63px;height:14px;line-height:14px;color:#00FF00">Average</div>
<div class="t b c" style="left:68px;top:17px;width:63px;height:14px;line-height:14px;color:#00FF00">Bet</div>
<div style="left:133px;top:2px;width:194px;height:15px;background:#000;border-right:1px solid #ACA899;border-bottom:1px solid #ACA899;"></div>
<div class="t b c" style="left:133px;top:2px;width:193px;height:14px;line-height:14px;color:#00FF00;">Results</div>
<div style="left:328px;top:2px;width:129px;height:15px;background:#000;border-right:1px solid #ACA899;border-bottom:1px solid #ACA899;"></div>
<div class="t b c" style="left:328px;top:2px;width:128px;height:14px;line-height:14px;color:#00FF00;">Std Dev</div>
<div style="left:458px;top:2px;width:64px;height:31px;background:#000;border-right:1px solid #ACA899;border-bottom:1px solid #ACA899;"></div>
<div class="t b c" style="left:458px;top:4px;width:63px;height:14px;line-height:14px;color:#00FF00">Risk of</div>
<div class="t b c" style="left:458px;top:17px;width:63px;height:14px;line-height:14px;color:#00FF00">Ruin</div>
<div style="left:523px;top:2px;width:259px;height:15px;background:#000;border-right:1px solid #ACA899;border-bottom:1px solid #ACA899;"></div>
<div class="t b c" style="left:523px;top:2px;width:258px;height:14px;line-height:14px;color:#00FF00;">Perform</div>
<div style="left:783px;top:2px;width:64px;height:15px;background:#000;border-right:1px solid #ACA899;border-bottom:1px solid #ACA899;"></div>
<div class="t b c" style="left:783px;top:2px;width:63px;height:14px;line-height:14px;color:#00FF00;">Hands</div>
<div style="left:848px;top:2px;width:117px;height:15px;background:#000;border-right:1px solid #ACA899;border-bottom:1px solid #ACA899;"></div>
<div class="t b c" style="left:848px;top:2px;width:116px;height:14px;line-height:14px;color:#00FF00;">Std Err</div>
<div style="left:133px;top:18px;width:64px;height:15px;background:#000;border-right:1px solid #ACA899;border-bottom:1px solid #ACA899;"></div>
<div class="t b c" style="left:133px;top:18px;width:63px;height:14px;line-height:14px;color:#00FF00;">%W/L</div>
<div style="left:198px;top:18px;width:64px;height:15px;background:#000;border-right:1px solid #ACA899;border-bottom:1px solid #ACA899;"></div>
<div class="t b c" style="left:198px;top:18px;width:63px;height:14px;line-height:14px;color:#00FF00;">Win/Hand</div>
<div style="left:263px;top:18px;width:64px;height:15px;background:#000;border-right:1px solid #ACA899;border-bottom:1px solid #ACA899;"></div>
<div class="t b c" style="left:263px;top:18px;width:63px;height:14px;line-height:14px;color:#00FF00;">Win/Hour</div>
<div style="left:328px;top:18px;width:64px;height:15px;background:#000;border-right:1px solid #ACA899;border-bottom:1px solid #ACA899;"></div>
<div class="t b c" style="left:328px;top:18px;width:63px;height:14px;line-height:14px;color:#00FF00;">Hand</div>
<div style="left:393px;top:18px;width:64px;height:15px;background:#000;border-right:1px solid #ACA899;border-bottom:1px solid #ACA899;"></div>
<div class="t b c" style="left:393px;top:18px;width:63px;height:14px;line-height:14px;color:#00FF00;">Hour</div>
<div style="left:523px;top:18px;width:64px;height:15px;background:#000;border-right:1px solid #ACA899;border-bottom:1px solid #ACA899;"></div>
<div class="t b c" style="left:523px;top:18px;width:63px;height:14px;line-height:14px;color:#00FF00;">DI</div>
<div style="left:588px;top:18px;width:64px;height:15px;background:#000;border-right:1px solid #ACA899;border-bottom:1px solid #ACA899;"></div>
<div class="t b c" style="left:588px;top:18px;width:63px;height:14px;line-height:14px;color:#00FF00;">SCORE</div>
<div style="left:653px;top:18px;width:64px;height:15px;background:#000;border-right:1px solid #ACA899;border-bottom:1px solid #ACA899;"></div>
<div class="t b c" style="left:653px;top:18px;width:63px;height:14px;line-height:14px;color:#00FF00;">CE</div>
<div style="left:718px;top:18px;width:64px;height:15px;background:#000;border-right:1px solid #ACA899;border-bottom:1px solid #ACA899;"></div>
<div class="t b c" style="left:718px;top:18px;width:63px;height:14px;line-height:14px;color:#00FF00;">CE/WR</div>
<div style="left:783px;top:18px;width:64px;height:15px;background:#000;border-right:1px solid #ACA899;border-bottom:1px solid #ACA899;"></div>
<div class="t b c" style="left:783px;top:18px;width:63px;height:14px;line-height:14px;color:#00FF00;">N0</div>
<div style="left:848px;top:18px;width:64px;height:15px;background:#000;border-right:1px solid #ACA899;border-bottom:1px solid #ACA899;"></div>
<div class="t b c" style="left:848px;top:18px;width:63px;height:14px;line-height:14px;color:#00FF00;">%W/L</div>
<div style="left:913px;top:18px;width:64px;height:15px;background:#000;border-right:1px solid #ACA899;border-bottom:1px solid #ACA899;"></div>
<div class="t b c" style="left:913px;top:18px;width:63px;height:14px;line-height:14px;color:#00FF00;">Win/Hour</div>
<div style="left:3px;top:34px;width:64px;height:15px;background:#000;border-right:1px solid #ACA899;border-bottom:1px solid #ACA899;"></div>
<div class="t b c" style="left:3px;top:34px;width:63px;height:14px;line-height:14px;color:#00FF00;">Optimal</div>
<div style="left:68px;top:34px;width:64px;height:15px;background:#00FF00;border-right:1px solid #ACA899;border-bottom:1px solid #ACA899;"></div>
<div class="t b c" style="left:68px;top:34px;width:63px;height:14px;line-height:14px;color:#000;">$306.35</div>
<div style="left:133px;top:34px;width:64px;height:15px;background:#00FF00;border-right:1px solid #ACA899;border-bottom:1px solid #ACA899;"></div>
<div class="t b c" style="left:133px;top:34px;width:63px;height:14px;line-height:14px;color:#000;">1.303%</div>
<div style="left:198px;top:34px;width:64px;height:15px;background:#00FF00;border-right:1px solid #ACA899;border-bottom:1px solid #ACA899;"></div>
<div class="t b c" style="left:198px;top:34px;width:63px;height:14px;line-height:14px;color:#000;">$2.61</div>
<div style="left:263px;top:34px;width:64px;height:15px;background:#00FF00;border-right:1px solid #ACA899;border-bottom:1px solid #ACA899;"></div>
<div class="t b c" style="left:263px;top:34px;width:63px;height:14px;line-height:14px;color:#000;">$260.82</div>
<div style="left:328px;top:34px;width:64px;height:15px;background:#00FF00;border-right:1px solid #ACA899;border-bottom:1px solid #ACA899;"></div>
<div class="t b c" style="left:328px;top:34px;width:63px;height:14px;line-height:14px;color:#000;">$433.58</div>
<div style="left:393px;top:34px;width:64px;height:15px;background:#00FF00;border-right:1px solid #ACA899;border-bottom:1px solid #ACA899;"></div>
<div class="t b c" style="left:393px;top:34px;width:63px;height:14px;line-height:14px;color:#000;">$3505.13</div>
<div style="left:458px;top:34px;width:64px;height:15px;background:#00FF00;border-right:1px solid #ACA899;border-bottom:1px solid #ACA899;"></div>
<div class="t b c" style="left:458px;top:34px;width:63px;height:14px;line-height:14px;color:#000;">11.9%</div>
<div style="left:523px;top:34px;width:64px;height:15px;background:#00FF00;border-right:1px solid #ACA899;border-bottom:1px solid #ACA899;"></div>
<div class="t b c" style="left:523px;top:34px;width:63px;height:14px;line-height:14px;color:#000;">7.44</div>
<div style="left:588px;top:34px;width:64px;height:15px;background:#00FF00;border-right:1px solid #ACA899;border-bottom:1px solid #ACA899;"></div>
<div class="t b c" style="left:588px;top:34px;width:63px;height:14px;line-height:14px;color:#000;">55.37</div>
<div style="left:653px;top:34px;width:64px;height:15px;background:#00FF00;border-right:1px solid #ACA899;border-bottom:1px solid #ACA899;"></div>
<div class="t b c" style="left:653px;top:34px;width:63px;height:14px;line-height:14px;color:#000;">$137.96</div>
<div style="left:718px;top:34px;width:64px;height:15px;background:#00FF00;border-right:1px solid #ACA899;border-bottom:1px solid #ACA899;"></div>
<div class="t b c" style="left:718px;top:34px;width:63px;height:14px;line-height:14px;color:#000;">0.53</div>
<div style="left:783px;top:34px;width:64px;height:15px;background:#00FF00;border-right:1px solid #ACA899;border-bottom:1px solid #ACA899;"></div>
<div class="t b c" style="left:783px;top:34px;width:63px;height:14px;line-height:14px;color:#000;">18,060</div>
<div style="left:848px;top:34px;width:64px;height:15px;background:#00FF00;border-right:1px solid #ACA899;border-bottom:1px solid #ACA899;"></div>
<div class="t b c" style="left:848px;top:34px;width:63px;height:14px;line-height:14px;color:#000;">.006</div>
<div style="left:913px;top:34px;width:64px;height:15px;background:#00FF00;border-right:1px solid #ACA899;border-bottom:1px solid #ACA899;"></div>
<div class="t b c" style="left:913px;top:34px;width:63px;height:14px;line-height:14px;color:#000;">$1.76</div>
<div style="left:3px;top:50px;width:64px;height:15px;background:#000;border-right:1px solid #ACA899;border-bottom:1px solid #ACA899;"></div>
<div class="t b c" style="left:3px;top:50px;width:63px;height:14px;line-height:14px;color:#00FF00;">Custom</div>
<div style="left:68px;top:50px;width:64px;height:15px;background:#00FFFF;border-right:1px solid #ACA899;border-bottom:1px solid #ACA899;"></div>
<div class="t b c" style="left:68px;top:50px;width:63px;height:14px;line-height:14px;color:#000;">$306.35</div>
<div style="left:133px;top:50px;width:64px;height:15px;background:#00FFFF;border-right:1px solid #ACA899;border-bottom:1px solid #ACA899;"></div>
<div class="t b c" style="left:133px;top:50px;width:63px;height:14px;line-height:14px;color:#000;">1.303%</div>
<div style="left:198px;top:50px;width:64px;height:15px;background:#00FFFF;border-right:1px solid #ACA899;border-bottom:1px solid #ACA899;"></div>
<div class="t b c" style="left:198px;top:50px;width:63px;height:14px;line-height:14px;color:#000;">$2.61</div>
<div style="left:263px;top:50px;width:64px;height:15px;background:#00FFFF;border-right:1px solid #ACA899;border-bottom:1px solid #ACA899;"></div>
<div class="t b c" style="left:263px;top:50px;width:63px;height:14px;line-height:14px;color:#000;">$260.82</div>
<div style="left:328px;top:50px;width:64px;height:15px;background:#00FFFF;border-right:1px solid #ACA899;border-bottom:1px solid #ACA899;"></div>
<div class="t b c" style="left:328px;top:50px;width:63px;height:14px;line-height:14px;color:#000;">$433.58</div>
<div style="left:393px;top:50px;width:64px;height:15px;background:#00FFFF;border-right:1px solid #ACA899;border-bottom:1px solid #ACA899;"></div>
<div class="t b c" style="left:393px;top:50px;width:63px;height:14px;line-height:14px;color:#000;">$3505.13</div>
<div style="left:458px;top:50px;width:64px;height:15px;background:#00FFFF;border-right:1px solid #ACA899;border-bottom:1px solid #ACA899;"></div>
<div class="t b c" style="left:458px;top:50px;width:63px;height:14px;line-height:14px;color:#000;">11.9%</div>
<div style="left:523px;top:50px;width:64px;height:15px;background:#00FFFF;border-right:1px solid #ACA899;border-bottom:1px solid #ACA899;"></div>
<div class="t b c" style="left:523px;top:50px;width:63px;height:14px;line-height:14px;color:#000;">7.44</div>
<div style="left:588px;top:50px;width:64px;height:15px;background:#00FFFF;border-right:1px solid #ACA899;border-bottom:1px solid #ACA899;"></div>
<div class="t b c" style="left:588px;top:50px;width:63px;height:14px;line-height:14px;color:#000;">55.37</div>
<div style="left:653px;top:50px;width:64px;height:15px;background:#00FFFF;border-right:1px solid #ACA899;border-bottom:1px solid #ACA899;"></div>
<div class="t b c" style="left:653px;top:50px;width:63px;height:14px;line-height:14px;color:#000;">$137.96</div>
<div style="left:718px;top:50px;width:64px;height:15px;background:#00FFFF;border-right:1px solid #ACA899;border-bottom:1px solid #ACA899;"></div>
<div class="t b c" style="left:718px;top:50px;width:63px;height:14px;line-height:14px;color:#000;">0.53</div>
<div style="left:783px;top:50px;width:64px;height:15px;background:#00FFFF;border-right:1px solid #ACA899;border-bottom:1px solid #ACA899;"></div>
<div class="t b c" style="left:783px;top:50px;width:63px;height:14px;line-height:14px;color:#000;">18,060</div>
<div style="left:848px;top:50px;width:64px;height:15px;background:#00FFFF;border-right:1px solid #ACA899;border-bottom:1px solid #ACA899;"></div>
<div class="t b c" style="left:848px;top:50px;width:63px;height:14px;line-height:14px;color:#000;">.006</div>
<div style="left:913px;top:50px;width:64px;height:15px;background:#00FFFF;border-right:1px solid #ACA899;border-bottom:1px solid #ACA899;"></div>
<div class="t b c" style="left:913px;top:50px;width:63px;height:14px;line-height:14px;color:#000;">$1.76</div>
</div>
<div style="left:970px;top:606px;width:2px;height:65px;background:#fff;"></div>
<div style="left:972px;top:605px;width:3px;height:68px;background:#F6EFDD;"></div>
</div>
</body></html>
